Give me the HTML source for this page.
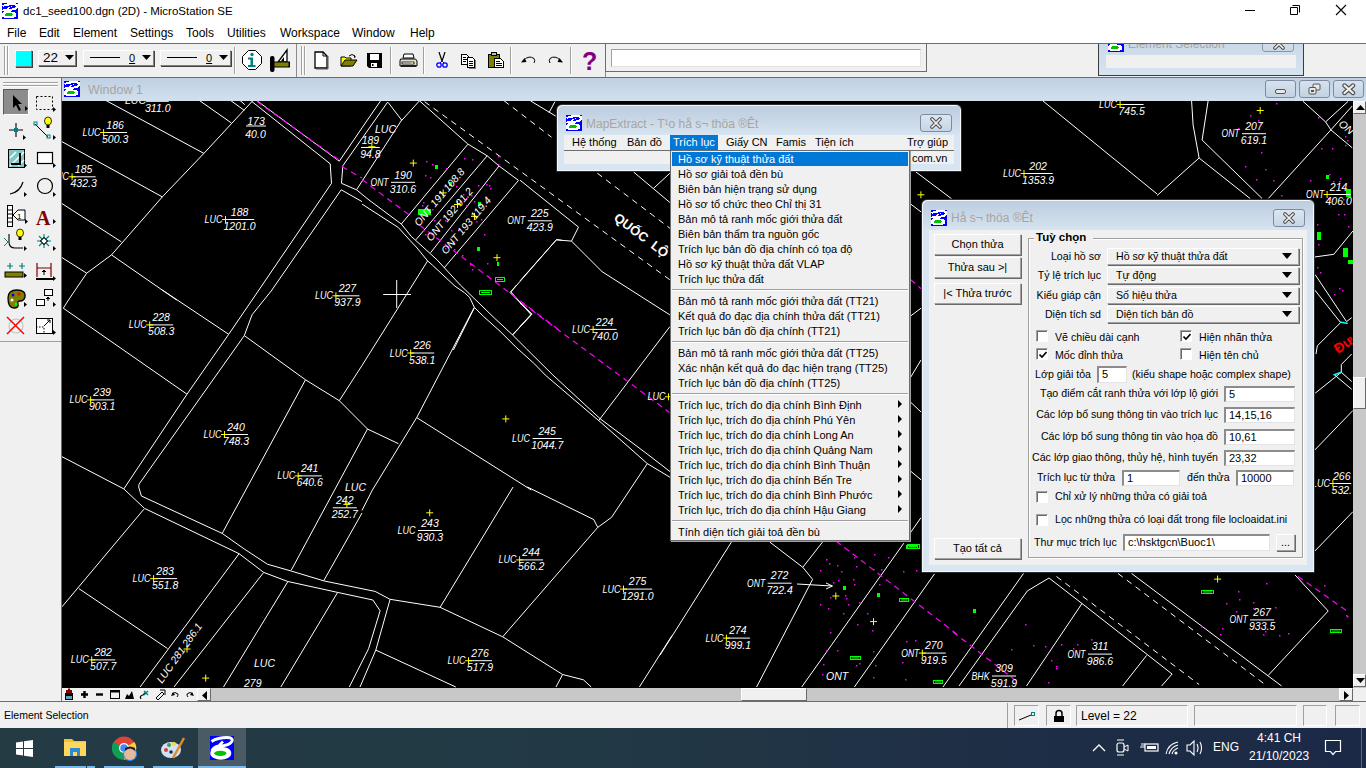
<!DOCTYPE html>
<html><head><meta charset="utf-8">
<style>
*{margin:0;padding:0;box-sizing:border-box}
html,body{width:1366px;height:768px;overflow:hidden;background:#f0f0f0;font-family:"Liberation Sans",sans-serif;font-size:12px;color:#000}
.a{position:absolute}
.t{position:absolute;white-space:nowrap;line-height:1}
</style></head><body>

<div class="a" style="left:0px;top:44px;width:1366px;height:33px;background:#f0f0f0;"></div>
<div class="a" style="left:4px;top:46px;width:1px;height:29px;background:#a0a0a0;"></div>
<div class="a" style="left:5px;top:46px;width:1px;height:29px;background:#fff;"></div>
<div class="a" style="left:7px;top:46px;width:1px;height:29px;background:#a0a0a0;"></div>
<div class="a" style="left:8px;top:46px;width:1px;height:29px;background:#fff;"></div>
<div class="a" style="left:301px;top:46px;width:1px;height:29px;background:#a0a0a0;"></div>
<div class="a" style="left:302px;top:46px;width:1px;height:29px;background:#fff;"></div>
<div class="a" style="left:304px;top:46px;width:1px;height:29px;background:#a0a0a0;"></div>
<div class="a" style="left:305px;top:46px;width:1px;height:29px;background:#fff;"></div>
<div class="a" style="left:296px;top:44px;width:1px;height:33px;background:#8a8a8a;"></div>
<div class="a" style="left:605px;top:44px;width:1px;height:33px;background:#8a8a8a;"></div>
<div class="a" style="left:0px;top:77px;width:61px;height:1px;background:#6d6d6d;"></div>
<div class="a" style="left:15px;top:50px;width:17px;height:17px;background:#00ffff;border-top:1px solid #fff;border-left:1px solid #fff;border-right:1px solid #808080;border-bottom:1px solid #808080;box-shadow:1px 1px 0 #404040"></div>
<div class="a" style="left:38px;top:50px;width:38px;height:16px;background:#f0f0f0;border-top:1px solid #fff;border-left:1px solid #fff;border-right:1px solid #808080;border-bottom:1px solid #808080;box-shadow:1px 1px 0 #404040"><div class="t" style="left:4px;top:-0.5px;font-size:13.5px;color:#000;font-weight:400;">22</div><svg class="a" style="left:26px;top:4px" width="9" height="6"><path d="M0 0h9L4.5 5z" fill="#000"/></svg></div>
<div class="a" style="left:83px;top:50px;width:71px;height:16px;background:#f0f0f0;border-top:1px solid #fff;border-left:1px solid #fff;border-right:1px solid #808080;border-bottom:1px solid #808080;box-shadow:1px 1px 0 #404040"><div class="a" style="left:6px;top:6px;width:30px;height:1px;background:#000"></div><div class="t" style="left:45px;top:2px;font-size:11px;color:#000;font-weight:400;"><u>0</u></div><svg class="a" style="left:58px;top:4px" width="9" height="6"><path d="M0 0h9L4.5 5z" fill="#000"/></svg></div>
<div class="a" style="left:160px;top:50px;width:71px;height:16px;background:#f0f0f0;border-top:1px solid #fff;border-left:1px solid #fff;border-right:1px solid #808080;border-bottom:1px solid #808080;box-shadow:1px 1px 0 #404040"><div class="a" style="left:6px;top:6px;width:30px;height:1px;background:#000"></div><div class="t" style="left:45px;top:2px;font-size:11px;color:#000;font-weight:400;"><u>0</u></div><svg class="a" style="left:58px;top:4px" width="9" height="6"><path d="M0 0h9L4.5 5z" fill="#000"/></svg></div>
<div class="a" style="left:234px;top:47px;width:1px;height:27px;background:#a0a0a0;"></div>
<div class="a" style="left:235px;top:47px;width:1px;height:27px;background:#fff;"></div>
<svg class="a" style="left:241px;top:49px" width="23" height="23"><path d="M7.5 1.5h7l6 6v7l-6 6h-7l-6-6v-7z" fill="#fff" stroke="#000" stroke-width="1"/><circle cx="11" cy="5.5" r="1.7" fill="#008080"/><path d="M7 8.5h5v7.5h2.5v2H7v-2h2.5V10.5H7z" fill="#008080"/></svg>
<svg class="a" style="left:269px;top:48px" width="22" height="25"><path d="M18 2L9 14h9z" fill="#fff" stroke="#000" stroke-width="1.3"/><path d="M15 9l-3 4h3z" fill="#000"/><rect x="1" y="8" width="4.5" height="16" rx="2" fill="#000"/><rect x="4" y="13.5" width="17" height="6" fill="#000"/><rect x="5.5" y="14.5" width="14" height="4" fill="#808000"/></svg>
<svg class="a" style="left:314px;top:51px" width="16" height="19"><path d="M1 1h8l4 4v12H1z" fill="#fff" stroke="#000" stroke-width="1.3"/><path d="M9 1v4h4" fill="none" stroke="#000"/><path d="M14 5v13H2" fill="none" stroke="#555" stroke-width="1"/></svg>
<svg class="a" style="left:340px;top:53px" width="18" height="15"><path d="M1 4h4l1 1h5v8H1z" fill="#ffff00" stroke="#000" stroke-width="1"/><path d="M1 13l4-6h12l-4 6z" fill="#808000" stroke="#000" stroke-width="1"/><path d="M9 3q3-3 6 0" fill="none" stroke="#000"/><path d="M14 2l2 2-2 1z" fill="#000"/></svg>
<svg class="a" style="left:366px;top:52px" width="18" height="17"><path d="M1 1h15v15H3l-2-2z" fill="#000"/><rect x="4" y="2" width="9" height="6" fill="#fff"/><rect x="5" y="11" width="6" height="4" fill="#fff"/><rect x="6" y="12" width="1.5" height="2" fill="#000"/></svg>
<div class="a" style="left:390px;top:47px;width:1px;height:27px;background:#a0a0a0;"></div>
<div class="a" style="left:391px;top:47px;width:1px;height:27px;background:#fff;"></div>
<svg class="a" style="left:399px;top:53px" width="19" height="15"><path d="M5 1h9l1 4H4z" fill="#fff" stroke="#000"/><path d="M1.5 6h15l1.5 2v5H1v-5z" fill="#e0e0e0" stroke="#000"/><rect x="3" y="9" width="12" height="2" fill="#fff" stroke="#000" stroke-width=".8"/><rect x="12" y="9.3" width="2" height="1.5" fill="#ffd800"/><path d="M2 13h15" stroke="#000" stroke-width="1.5"/></svg>
<div class="a" style="left:423px;top:47px;width:1px;height:27px;background:#a0a0a0;"></div>
<div class="a" style="left:424px;top:47px;width:1px;height:27px;background:#fff;"></div>
<svg class="a" style="left:436px;top:52px" width="12" height="17"><path d="M3 0l3 9M9 0L6 9" stroke="#000" stroke-width="1.2"/><circle cx="3" cy="13" r="2.2" fill="none" stroke="#0000ff" stroke-width="1.3"/><circle cx="9" cy="13" r="2.2" fill="none" stroke="#0000ff" stroke-width="1.3"/><path d="M6 9L4 11M6 9l2 2" stroke="#0000ff"/></svg>
<svg class="a" style="left:460px;top:53px" width="17" height="16" shape-rendering="crispEdges"><path d="M1.5 1.5h5l2 2v8h-7z" fill="#fff" stroke="#000"/><path d="M7.5 4.5h5l2 2v8h-7z" fill="#fff" stroke="#000"/><path d="M3 4h3M3 6h4M3 8h3M9 8h4M9 10h4M9 12h4" stroke="#000" stroke-width="1"/><path d="M15 7v8.5H8.5" fill="none" stroke="#808080"/></svg>
<svg class="a" style="left:487px;top:51px" width="19" height="18" shape-rendering="crispEdges"><path d="M1.5 3.5h11v13h-11z" fill="#808000" stroke="#000"/><path d="M4.5 1.5h5v3h-5z" fill="#c0c0c0" stroke="#000"/><path d="M7.5 7.5h6l3 3v6h-9z" fill="#fff" stroke="#000"/><path d="M9 10h4M9 12h6M9 14h6" stroke="#000" stroke-width="1"/></svg>
<div class="a" style="left:510px;top:47px;width:1px;height:27px;background:#a0a0a0;"></div>
<div class="a" style="left:511px;top:47px;width:1px;height:27px;background:#fff;"></div>
<svg class="a" style="left:520px;top:55px" width="17" height="10"><path d="M4 5Q9 0 14 3.5Q15.5 5.5 14 8" fill="none" stroke="#000" stroke-width="1"/><path d="M1 7.5l3.5-4.5 2 4z" fill="#000"/></svg>
<svg class="a" style="left:547px;top:55px" width="17" height="10"><path d="M13 5Q8 0 3 3.5Q1.5 5.5 3 8" fill="none" stroke="#000" stroke-width="1"/><path d="M16 7.5l-3.5-4.5-2 4z" fill="#000"/></svg>
<div class="a" style="left:570px;top:47px;width:1px;height:27px;background:#a0a0a0;"></div>
<div class="a" style="left:571px;top:47px;width:1px;height:27px;background:#fff;"></div>
<div class="t" style="left:582px;top:49px;font-size:25px;color:#800080;font-weight:700;">?</div>
<div class="a" style="left:605px;top:43px;width:322px;height:29px;border:1px solid #6d6d6d;border-top:none;background:#f0f0f0"></div>
<div class="a" style="left:611px;top:49px;width:310px;height:18px;background:#fff;border-top:1px solid #a0a0a0;border-left:1px solid #a0a0a0;border-right:1px solid #e3e3e3;border-bottom:1px solid #e3e3e3"></div>
<div class="a" style="left:61px;top:77px;width:1305px;height:1px;background:#6d6d6d;"></div>
<div class="a" style="left:61px;top:77px;width:1px;height:626px;background:#6d6d6d;"></div>
<div class="a" style="left:62px;top:78px;width:1304px;height:23px;background:linear-gradient(#bfd0e2,#d2e0ee);"></div>
<svg class="a" style="left:64px;top:81px" width="16" height="16" viewBox="0 0 16 16" shape-rendering="crispEdges"><rect width="16" height="16" fill="#fff"/><path d="M0 0h5v1h-5zM14 0h2v1h-2zM0 1h2v1h-2zM7 2h6v1h-6zM0 3h1v1h-1zM2 3h7v1h-7zM10 3h4v1h-4zM0 4h6v1h-6zM8 4h5v1h-5zM0 5h5v1h-5zM7 5h3v1h-3zM15 5h1v1h-1zM0 6h1v1h-1zM14 6h2v1h-2zM10 7h6v1h-6zM0 8h2v1h-2zM9 8h7v1h-7zM0 9h1v1h-1zM13 9h3v1h-3zM14 10h2v1h-2zM14 11h2v1h-2zM14 12h2v1h-2zM14 13h2v1h-2zM0 14h2v1h-2zM12 14h4v1h-4zM0 15h16v1h-16z" fill="#0000ff"/><path d="M4 10h6v1h-6zM3 11h8v1h-8zM3 12h7v1h-7z" fill="#00c000"/></svg>
<div class="t" style="left:88px;top:84px;font-size:12.5px;color:#a8a4a0;font-weight:400;">Window 1</div>
<div class="a" style="left:1265px;top:80px;width:31px;height:18px;border:1px solid #7d8ba0;border-radius:3px;background:linear-gradient(#d6e2ee,#c3d2e2)"><div class="a" style="left:9px;top:8px;width:11px;height:5px;background:#e8e8e8;border:1px solid #555;border-radius:2px"></div></div>
<div class="a" style="left:1299px;top:80px;width:31px;height:18px;border:1px solid #7d8ba0;border-radius:3px;background:linear-gradient(#d6e2ee,#c3d2e2)"><svg class="a" style="left:8px;top:2px" width="14" height="12"><rect x="5" y="1" width="7" height="6" rx="1" fill="#e8e8e8" stroke="#555"/><rect x="1" y="4.5" width="7" height="6.5" rx="1" fill="#e8e8e8" stroke="#555"/><rect x="3" y="7" width="3" height="2" fill="#555"/></svg></div>
<div class="a" style="left:1333px;top:80px;width:31px;height:18px;border:1px solid #7d8ba0;border-radius:3px;background:linear-gradient(#d6e2ee,#c3d2e2)"><svg class="a" style="left:8px;top:2px" width="14" height="13"><path d="M2.5 2.5l8.5 7.5M11 2.5l-8.5 7.5" stroke="#505050" stroke-width="4.4" stroke-linecap="round"/><path d="M2.5 2.5l8.5 7.5M11 2.5l-8.5 7.5" stroke="#f0f0f0" stroke-width="2.2" stroke-linecap="round"/></svg></div>
<div class="a" style="left:62px;top:101px;width:1291px;height:587px;background:#000;"></div>
<svg class="a" style="left:62px;top:101px" width="1291" height="587" viewBox="62 101 1291 587" font-family="Liberation Sans">
<path d="M105.0 100.0L203.9 153.4M198.7 100.0L231.3 122.9M230.0 100.0L244.3 110.4M239.6 100.0L244.8 104.7M253.4 100.0L203.9 153.4L162.3 196.9L111.5 254.9L86.7 273.2L68.5 300.0L63.3 308.2M62.0 141.7L162.3 196.9M62.0 203.6L121.4 241.9M62.0 257.6L86.7 273.2M111.5 254.9L176.6 300.0M251.6 101.3L330.2 163.8L331.5 183.3L258.9 290.0M341.2 189.8L271.9 290.0M256.0 100.0L339.3 161.2L362.0 127.9M342.8 165.8L341.5 183.3L356.5 189.8L369.0 200.0M387.7 102.0L342.8 165.8M402.0 119.5L356.5 189.8M341.2 189.8L362.0 201.6M145.9 101.3L168.8 101.3M246.0 126.0L266.0 126.0M380.6 100.8L362.0 127.9M388.2 102.5L401.8 120.3M419.5 100.8L401.8 120.3M419.5 100.8L467.8 144.0L487.2 155.8L499.1 166.0L518.5 180.4M530.4 100.8L555.7 116.1M549.0 112.7L554.9 101.7M467.8 144.3L401.3 224.0M487.2 155.8L415.9 239.8M499.0 166.0L430.6 252.7M518.5 180.4L444.0 268.0M369.0 200.0L401.3 224.0L411.2 236.3L422.9 246.9L437.0 259.8L460.3 285.0L494.8 318.4L512.4 334.8L526.5 348.9L552.9 375.0M362.0 204.1L398.3 227.5L410.0 240.4L417.1 248.0L427.6 260.9L432.3 265.0L455.0 286.2L464.4 292.6L469.6 297.3L474.3 307.3L483.7 316.6L500.1 331.3L515.9 347.1L534.7 364.1L545.2 375.0M427.6 260.9L362.0 365.5M474.3 307.9L453.4 350.0M510.1 292.6L516.5 285.0M510.1 292.6L531.8 314.3L512.4 334.8M383.2 294.5L411.0 294.5M396.7 280.0L396.7 308.0M562.0 240.3L556.6 239.5L510.9 291.9L531.2 314.8L512.6 335.1M520.0 180.2L578.5 227.1L571.5 241.1L556.3 239.9L520.0 280.9M571.5 241.1L602.0 271.6L669.9 314.9M633.6 172.0L669.9 202.5M653.5 188.4L669.9 173.2M520.0 303.2L531.7 313.7L520.0 326.6M669.9 326.6L599.0 420.2M63.3 308.2L187.0 394.2M162.3 290.0L228.7 334.3M258.9 290.0L228.7 334.3L187.0 394.2L123.8 488.9L144.5 508.4L239.1 553.7L263.7 572.4L287.9 581.5L337.6 592.4L372.9 600.0L380.1 610.8L368.6 648.7L349.3 687.0M272.0 290.0L252.1 314.7L244.3 335.6L139.0 484.2L138.7 487.0L141.4 496.0L222.2 533.4L244.3 549.0L267.4 564.2L291.1 571.0L324.3 581.0L375.1 591.4L390.1 599.3L440.1 607.3L502.7 636.8L562.6 674.5L583.4 679.8L591.2 687.0M244.3 335.6L305.5 379.8L339.3 400.7L367.5 429.0L398.5 443.7M305.5 379.8L222.2 533.4M362.0 365.5L339.3 400.7M367.5 429.0L291.2 570.3M62.0 456.7L123.8 488.9M474.3 307.3L416.7 417.6L372.4 490.0L362.0 510.4M545.2 375.0L601.5 423.0L647.3 463.6L670.2 477.4M552.9 375.0L600.1 418.7L645.9 453.0L670.2 471.7M416.7 417.6L531.3 490.0M647.3 463.6L611.5 517.4M144.0 509.1L62.0 606.8M78.9 588.6L167.5 648.5M239.1 553.7L140.1 687.0M263.7 572.4L174.0 687.0M287.9 581.5L223.5 687.0M337.6 592.4L280.8 687.0M362.0 513.0L323.7 580.8M513.1 487.0L440.1 607.3M527.4 487.0L593.8 519.6L597.7 527.4L611.5 517.4M597.7 527.4L502.7 636.8M390.1 599.3L375.8 650.1L360.0 687.0M375.8 650.1L455.8 687.0M562.6 674.5L556.0 687.0M672.0 635.5L639.4 687.0M731.4 542.1L660.0 655.2M769.8 542.1L802.8 567.3L812.6 579.4L756.6 687.0M822.5 542.1L802.8 567.3M903.8 543.2L801.7 687.0M934.5 573.9L854.4 687.0M797.0 584.0L832.4 586.0M826.0 583.0L832.4 586.0L826.0 589.0M1023.5 573.5L943.0 687.0M1049.0 578.0L1027.4 590.9L959.0 686.0M1049.0 578.0L1082.0 603.5L1172.1 674.0L1161.6 686.0M1082.0 603.5L1026.5 686.0M1146.6 655.4L1122.6 686.0M1131.6 573.5L1281.6 686.0M1295.1 575.0L1328.2 611.0L1268.1 675.5M1043.0 101.0L1157.1 194.0M1191.6 101.0L1193.1 125.0L1199.1 158.0L1157.1 195.5M1208.1 101.0L1202.1 140.0L1262.1 198.5M1199.1 158.0L1250.1 198.5M1303.0 101.3L1325.6 121.9L1330.9 129.9L1352.2 147.8M1352.2 106.0L1330.9 129.9L1268.5 198.3M1348.2 101.3L1325.6 121.9M916.0 172.0L951.5 198.7M1352.9 231.0L1333.8 254.3L1314.6 257.0M1315.2 274.7L1346.5 321.6L1351.7 317.7M1314.6 289.8L1340.6 322.6M1340.6 322.6L1317.3 345.9L1316.0 354.0M1351.7 354.0L1341.3 364.5L1341.3 372.3L1315.2 393.2M1341.3 372.3L1351.7 381.5M1334.7 375.0L1351.7 389.3M1352.9 410.5L1314.6 450.2M1352.9 511.7L1314.6 551.3M910.6 204.0L921.0 211.9M910.6 316.0L921.0 308.2M921.0 360.0L910.1 378.2M910.1 401.7L921.0 412.0M910.1 470.7L921.0 479.8M921.0 517.6L910.1 533.2" fill="none" stroke="#fff" stroke-width="1"/>
<path d="M504.1 100.8L551.5 137.2M424.6 101.7L669.9 279.8M597.3 173.2L669.9 228.2M1056.5 576.5L1199.1 684.5M1118.0 573.5L1265.1 684.5" fill="none" stroke="#fff" stroke-width="1" stroke-dasharray="6 5"/>
<path d="M256.8 101.3L339.3 160.4M341.9 166.4L362.0 178.1M362.0 179.5L409.4 215.1M419.5 225.1L559.1 330.0M522.3 303.2L669.4 412.4M836.0 541.0L960.0 636.5M953.0 632.0L1019.0 683.0M1298.1 576.5L1349.2 612.5M910.6 279.6L921.0 288.7" fill="none" stroke="#ff00ff" stroke-width="1.2" stroke-dasharray="6 4.5"/>
<path d="M1340.0 322.0L1347.8 323.6M1341.3 372.3L1333.4 375.0" fill="none" stroke="#00ffff" stroke-width="1.5"/>
<path d="M446 168h1.5v1.5h-1.5zM472 159h1.5v1.5h-1.5zM463 194h1.5v1.5h-1.5zM425 211h1.5v1.5h-1.5zM423 202h1.5v1.5h-1.5zM426 161h1.5v1.5h-1.5zM454 249h1.5v1.5h-1.5zM430 177h1.5v1.5h-1.5zM470 264h1.5v1.5h-1.5zM466 198h1.5v1.5h-1.5zM498 156h1.5v1.5h-1.5zM489 185h1.5v1.5h-1.5zM432 164h1.5v1.5h-1.5zM445 248h1.5v1.5h-1.5zM434 220h1.5v1.5h-1.5zM471 195h1.5v1.5h-1.5zM464 158h1.5v1.5h-1.5zM425 175h1.5v1.5h-1.5zM474 201h1.5v1.5h-1.5zM445 220h1.5v1.5h-1.5zM456 186h1.5v1.5h-1.5zM484 234h1.5v1.5h-1.5zM440 219h1.5v1.5h-1.5zM462 255h1.5v1.5h-1.5zM478 185h1.5v1.5h-1.5zM498 164h1.5v1.5h-1.5zM453 241h1.5v1.5h-1.5zM432 209h1.5v1.5h-1.5zM423 230h1.5v1.5h-1.5zM481 219h1.5v1.5h-1.5zM490 188h1.5v1.5h-1.5zM476 221h1.5v1.5h-1.5zM466 205h1.5v1.5h-1.5zM487 263h1.5v1.5h-1.5zM458 230h1.5v1.5h-1.5zM425 234h1.5v1.5h-1.5zM472 269h1.5v1.5h-1.5zM486 184h1.5v1.5h-1.5zM451 230h1.5v1.5h-1.5zM422 205h1.5v1.5h-1.5zM837 565h1.5v1.5h-1.5zM826 650h1.5v1.5h-1.5zM833 582h1.5v1.5h-1.5zM859 663h1.5v1.5h-1.5zM828 608h1.5v1.5h-1.5zM875 665h1.5v1.5h-1.5zM902 662h1.5v1.5h-1.5zM848 604h1.5v1.5h-1.5zM856 665h1.5v1.5h-1.5zM916 570h1.5v1.5h-1.5zM838 580h1.5v1.5h-1.5zM843 613h1.5v1.5h-1.5zM879 584h1.5v1.5h-1.5zM820 604h1.5v1.5h-1.5zM857 624h1.5v1.5h-1.5zM915 640h1.5v1.5h-1.5zM872 630h1.5v1.5h-1.5zM888 557h1.5v1.5h-1.5zM910 651h1.5v1.5h-1.5zM907 654h1.5v1.5h-1.5zM859 602h1.5v1.5h-1.5zM830 632h1.5v1.5h-1.5zM826 559h1.5v1.5h-1.5zM841 571h1.5v1.5h-1.5zM854 557h1.5v1.5h-1.5zM820 570h1.5v1.5h-1.5zM830 597h1.5v1.5h-1.5zM823 664h1.5v1.5h-1.5zM881 569h1.5v1.5h-1.5zM845 595h1.5v1.5h-1.5zM856 566h1.5v1.5h-1.5zM905 679h1.5v1.5h-1.5zM867 613h1.5v1.5h-1.5zM829 563h1.5v1.5h-1.5zM854 584h1.5v1.5h-1.5zM903 571h1.5v1.5h-1.5zM822 674h1.5v1.5h-1.5zM873 569h1.5v1.5h-1.5zM874 554h1.5v1.5h-1.5zM873 677h1.5v1.5h-1.5zM906 641h1.5v1.5h-1.5zM846 598h1.5v1.5h-1.5zM837 650h1.5v1.5h-1.5zM873 651h1.5v1.5h-1.5zM853 579h1.5v1.5h-1.5zM1328 198h1.5v1.5h-1.5zM1333 181h1.5v1.5h-1.5zM1329 174h1.5v1.5h-1.5zM1261 152h1.5v1.5h-1.5zM1276 103h1.5v1.5h-1.5zM1238 128h1.5v1.5h-1.5zM1265 169h1.5v1.5h-1.5zM1345 145h1.5v1.5h-1.5zM1343 199h1.5v1.5h-1.5zM1345 136h1.5v1.5h-1.5zM1260 123h1.5v1.5h-1.5zM1258 120h1.5v1.5h-1.5zM1307 190h1.5v1.5h-1.5zM1332 148h1.5v1.5h-1.5zM1310 180h1.5v1.5h-1.5zM1245 166h1.5v1.5h-1.5zM1340 178h1.5v1.5h-1.5zM1321 148h1.5v1.5h-1.5zM1256 179h1.5v1.5h-1.5zM1273 180h1.5v1.5h-1.5zM1347 140h1.5v1.5h-1.5zM1281 195h1.5v1.5h-1.5zM1318 117h1.5v1.5h-1.5zM1250 115h1.5v1.5h-1.5zM1339 181h1.5v1.5h-1.5zM1222 628h1.5v1.5h-1.5zM1347 616h1.5v1.5h-1.5zM1253 608h1.5v1.5h-1.5zM1220 571h1.5v1.5h-1.5zM1346 615h1.5v1.5h-1.5zM1279 635h1.5v1.5h-1.5zM1265 631h1.5v1.5h-1.5zM1324 585h1.5v1.5h-1.5zM1238 591h1.5v1.5h-1.5zM1236 611h1.5v1.5h-1.5zM1239 599h1.5v1.5h-1.5zM1220 634h1.5v1.5h-1.5zM1253 602h1.5v1.5h-1.5zM1288 633h1.5v1.5h-1.5zM1263 634h1.5v1.5h-1.5zM1275 607h1.5v1.5h-1.5zM1279 571h1.5v1.5h-1.5zM1266 583h1.5v1.5h-1.5zM1201 626h1.5v1.5h-1.5zM1226 603h1.5v1.5h-1.5zM1073 648h1.5v1.5h-1.5zM1033 645h1.5v1.5h-1.5zM1056 668h1.5v1.5h-1.5zM1011 649h1.5v1.5h-1.5zM1025 624h1.5v1.5h-1.5zM1077 644h1.5v1.5h-1.5zM1056 666h1.5v1.5h-1.5zM1091 639h1.5v1.5h-1.5zM1061 644h1.5v1.5h-1.5zM1051 660h1.5v1.5h-1.5zM1045 646h1.5v1.5h-1.5zM1048 682h1.5v1.5h-1.5zM1339 288h1.5v1.5h-1.5zM1348 226h1.5v1.5h-1.5zM1334 294h1.5v1.5h-1.5zM1344 214h1.5v1.5h-1.5zM1318 244h1.5v1.5h-1.5zM1317 224h1.5v1.5h-1.5zM1317 267h1.5v1.5h-1.5zM1342 290h1.5v1.5h-1.5zM1320 272h1.5v1.5h-1.5zM1338 214h1.5v1.5h-1.5z" fill="#ff00ff"/>
<rect x="435" y="165" width="3" height="4" fill="#00ff00"/>
<rect x="449" y="182" width="3" height="4" fill="#00ff00"/>
<rect x="418" y="209" width="13" height="6" fill="#00ff00"/>
<rect x="478" y="202" width="3" height="4" fill="#00ff00"/>
<rect x="477" y="247" width="3" height="4" fill="#00ff00"/>
<rect x="497" y="262" width="2" height="4" fill="#00ff00"/>
<rect x="495.5" y="277.5" width="9" height="4" fill="none" stroke="#00ff00" stroke-width="1"/><path d="M497 279.5h6" stroke="#00ff00" stroke-width="1"/>
<rect x="479.5" y="290.5" width="12" height="4" fill="none" stroke="#00ff00" stroke-width="1"/><path d="M481 292.5h9" stroke="#00ff00" stroke-width="1"/>
<rect x="843" y="586" width="3" height="4" fill="#00ff00"/>
<rect x="877" y="593" width="3" height="4" fill="#00ff00"/>
<rect x="899.5" y="598.5" width="9" height="3" fill="none" stroke="#00ff00" stroke-width="1"/><path d="M901 600.0h6" stroke="#00ff00" stroke-width="1"/>
<rect x="850.5" y="656.5" width="10" height="3" fill="none" stroke="#00ff00" stroke-width="1"/><path d="M852 658.0h7" stroke="#00ff00" stroke-width="1"/>
<rect x="906.5" y="545.5" width="11" height="3" fill="none" stroke="#00ff00" stroke-width="1"/><path d="M908 547.0h8" stroke="#00ff00" stroke-width="1"/>
<rect x="933.5" y="680.5" width="9" height="3" fill="none" stroke="#00ff00" stroke-width="1"/><path d="M935 682.0h6" stroke="#00ff00" stroke-width="1"/>
<rect x="1201.5" y="590.5" width="12" height="3" fill="none" stroke="#00ff00" stroke-width="1"/><path d="M1203 592.0h9" stroke="#00ff00" stroke-width="1"/>
<rect x="973" y="609" width="3" height="4" fill="#00ff00"/>
<rect x="1330.5" y="629.5" width="11" height="3" fill="none" stroke="#00ff00" stroke-width="1"/><path d="M1332 631.0h8" stroke="#00ff00" stroke-width="1"/>
<rect x="1326" y="175" width="3" height="4" fill="#00ff00"/>
<rect x="1346" y="189" width="5" height="8" fill="#00ff00"/>
<rect x="1317" y="232" width="4" height="8" fill="#00ff00"/>
<rect x="1343" y="248" width="5" height="9" fill="#00ff00"/>
<rect x="1348" y="260" width="5" height="4" fill="#00ff00"/>
<rect x="907.5" y="544.5" width="12" height="4" fill="none" stroke="#00ff00" stroke-width="1"/><path d="M909 546.5h9" stroke="#00ff00" stroke-width="1"/>
<text x="100.6" y="136.0" text-anchor="end" font-size="10.5" font-style="italic" fill="#fff" textLength="18" lengthAdjust="spacingAndGlyphs">LUC</text>
<path d="M103.1 132.5h24.0" stroke="#fff" stroke-width="1"/>
<text x="115.1" y="128.7" text-anchor="middle" font-size="10.5" font-style="italic" fill="#fff">186</text>
<text x="115.1" y="143.0" text-anchor="middle" font-size="10.5" font-style="italic" fill="#fff">500.3</text>
<path d="M100.1 132.5h7M103.6 129.0v7" stroke="#ffff00" stroke-width="1"/>
<text x="69.1" y="180.3" text-anchor="end" font-size="10.5" font-style="italic" fill="#fff" textLength="18" lengthAdjust="spacingAndGlyphs">LUC</text>
<path d="M71.6 176.8h24.0" stroke="#fff" stroke-width="1"/>
<text x="83.6" y="173.0" text-anchor="middle" font-size="10.5" font-style="italic" fill="#fff">185</text>
<text x="83.6" y="187.3" text-anchor="middle" font-size="10.5" font-style="italic" fill="#fff">432.3</text>
<path d="M68.6 176.8h7M72.1 173.3v7" stroke="#ffff00" stroke-width="1"/>
<text x="222.5" y="223.0" text-anchor="end" font-size="10.5" font-style="italic" fill="#fff" textLength="18" lengthAdjust="spacingAndGlyphs">LUC</text>
<path d="M225.0 219.5h29.2" stroke="#fff" stroke-width="1"/>
<text x="239.6" y="215.7" text-anchor="middle" font-size="10.5" font-style="italic" fill="#fff">188</text>
<text x="239.6" y="230.0" text-anchor="middle" font-size="10.5" font-style="italic" fill="#fff">1201.0</text>
<path d="M222.0 219.5h7M225.5 216.0v7" stroke="#ffff00" stroke-width="1"/>
<text x="332.9" y="299.3" text-anchor="end" font-size="10.5" font-style="italic" fill="#fff" textLength="18" lengthAdjust="spacingAndGlyphs">LUC</text>
<path d="M335.4 295.8h24.0" stroke="#fff" stroke-width="1"/>
<text x="347.4" y="292.0" text-anchor="middle" font-size="10.5" font-style="italic" fill="#fff">227</text>
<text x="347.4" y="306.3" text-anchor="middle" font-size="10.5" font-style="italic" fill="#fff">937.9</text>
<path d="M332.4 295.8h7M335.9 292.3v7" stroke="#ffff00" stroke-width="1"/>
<path d="M361.0 147.5h18.8" stroke="#fff" stroke-width="1"/>
<text x="370.4" y="143.7" text-anchor="middle" font-size="10.5" font-style="italic" fill="#fff">189</text>
<text x="370.4" y="158.0" text-anchor="middle" font-size="10.5" font-style="italic" fill="#fff">94.8</text>
<text x="388.5" y="185.8" text-anchor="end" font-size="10.5" font-style="italic" fill="#fff" textLength="18" lengthAdjust="spacingAndGlyphs">ONT</text>
<path d="M391.0 182.3h24.0" stroke="#fff" stroke-width="1"/>
<text x="403.0" y="178.5" text-anchor="middle" font-size="10.5" font-style="italic" fill="#fff">190</text>
<text x="403.0" y="192.8" text-anchor="middle" font-size="10.5" font-style="italic" fill="#fff">310.6</text>
<text x="525.3" y="224.3" text-anchor="end" font-size="10.5" font-style="italic" fill="#fff" textLength="18" lengthAdjust="spacingAndGlyphs">ONT</text>
<path d="M527.8 220.8h24.0" stroke="#fff" stroke-width="1"/>
<text x="539.8" y="217.0" text-anchor="middle" font-size="10.5" font-style="italic" fill="#fff">225</text>
<text x="539.8" y="231.3" text-anchor="middle" font-size="10.5" font-style="italic" fill="#fff">423.9</text>
<text x="590.1" y="332.9" text-anchor="end" font-size="10.5" font-style="italic" fill="#fff" textLength="18" lengthAdjust="spacingAndGlyphs">LUC</text>
<path d="M592.6 329.4h24.0" stroke="#fff" stroke-width="1"/>
<text x="604.6" y="325.6" text-anchor="middle" font-size="10.5" font-style="italic" fill="#fff">224</text>
<text x="604.6" y="339.9" text-anchor="middle" font-size="10.5" font-style="italic" fill="#fff">740.0</text>
<path d="M589.6 329.4h7M593.1 325.9v7" stroke="#ffff00" stroke-width="1"/>
<text x="146.7" y="328.4" text-anchor="end" font-size="10.5" font-style="italic" fill="#fff" textLength="18" lengthAdjust="spacingAndGlyphs">LUC</text>
<path d="M149.2 324.9h24.0" stroke="#fff" stroke-width="1"/>
<text x="161.2" y="321.1" text-anchor="middle" font-size="10.5" font-style="italic" fill="#fff">228</text>
<text x="161.2" y="335.4" text-anchor="middle" font-size="10.5" font-style="italic" fill="#fff">508.3</text>
<path d="M146.2 324.9h7M149.7 321.4v7" stroke="#ffff00" stroke-width="1"/>
<text x="87.6" y="403.4" text-anchor="end" font-size="10.5" font-style="italic" fill="#fff" textLength="18" lengthAdjust="spacingAndGlyphs">LUC</text>
<path d="M90.1 399.9h24.0" stroke="#fff" stroke-width="1"/>
<text x="102.1" y="396.1" text-anchor="middle" font-size="10.5" font-style="italic" fill="#fff">239</text>
<text x="102.1" y="410.4" text-anchor="middle" font-size="10.5" font-style="italic" fill="#fff">903.1</text>
<path d="M87.1 399.9h7M90.6 396.4v7" stroke="#ffff00" stroke-width="1"/>
<text x="221.5" y="438.0" text-anchor="end" font-size="10.5" font-style="italic" fill="#fff" textLength="18" lengthAdjust="spacingAndGlyphs">LUC</text>
<path d="M224.0 434.5h24.0" stroke="#fff" stroke-width="1"/>
<text x="236.0" y="430.7" text-anchor="middle" font-size="10.5" font-style="italic" fill="#fff">240</text>
<text x="236.0" y="445.0" text-anchor="middle" font-size="10.5" font-style="italic" fill="#fff">748.3</text>
<path d="M221.0 434.5h7M224.5 431.0v7" stroke="#ffff00" stroke-width="1"/>
<text x="295.2" y="479.4" text-anchor="end" font-size="10.5" font-style="italic" fill="#fff" textLength="18" lengthAdjust="spacingAndGlyphs">LUC</text>
<path d="M297.7 475.9h24.0" stroke="#fff" stroke-width="1"/>
<text x="309.7" y="472.1" text-anchor="middle" font-size="10.5" font-style="italic" fill="#fff">241</text>
<text x="309.7" y="486.4" text-anchor="middle" font-size="10.5" font-style="italic" fill="#fff">640.6</text>
<path d="M294.7 475.9h7M298.2 472.4v7" stroke="#ffff00" stroke-width="1"/>
<text x="407.7" y="356.5" text-anchor="end" font-size="10.5" font-style="italic" fill="#fff" textLength="18" lengthAdjust="spacingAndGlyphs">LUC</text>
<path d="M410.2 353.0h24.0" stroke="#fff" stroke-width="1"/>
<text x="422.2" y="349.2" text-anchor="middle" font-size="10.5" font-style="italic" fill="#fff">226</text>
<text x="422.2" y="363.5" text-anchor="middle" font-size="10.5" font-style="italic" fill="#fff">538.1</text>
<path d="M407.2 353.0h7M410.7 349.5v7" stroke="#ffff00" stroke-width="1"/>
<text x="530.1" y="442.0" text-anchor="end" font-size="10.5" font-style="italic" fill="#fff" textLength="18" lengthAdjust="spacingAndGlyphs">LUC</text>
<path d="M532.6 438.5h29.2" stroke="#fff" stroke-width="1"/>
<text x="547.2" y="434.7" text-anchor="middle" font-size="10.5" font-style="italic" fill="#fff">245</text>
<text x="547.2" y="449.0" text-anchor="middle" font-size="10.5" font-style="italic" fill="#fff">1044.7</text>
<text x="665.5" y="400.3" text-anchor="end" font-size="10.5" font-style="italic" fill="#fff" textLength="18" lengthAdjust="spacingAndGlyphs">LUC</text>
<path d="M665.0 396.8h7M668.5 393.3v7" stroke="#ffff00" stroke-width="1"/>
<text x="150.6" y="582.1" text-anchor="end" font-size="10.5" font-style="italic" fill="#fff" textLength="18" lengthAdjust="spacingAndGlyphs">LUC</text>
<path d="M153.1 578.6h24.0" stroke="#fff" stroke-width="1"/>
<text x="165.1" y="574.8" text-anchor="middle" font-size="10.5" font-style="italic" fill="#fff">283</text>
<text x="165.1" y="589.1" text-anchor="middle" font-size="10.5" font-style="italic" fill="#fff">551.8</text>
<path d="M150.1 578.6h7M153.6 575.1v7" stroke="#ffff00" stroke-width="1"/>
<text x="88.7" y="663.4" text-anchor="end" font-size="10.5" font-style="italic" fill="#fff" textLength="18" lengthAdjust="spacingAndGlyphs">LUC</text>
<path d="M91.2 659.9h24.0" stroke="#fff" stroke-width="1"/>
<text x="103.2" y="656.1" text-anchor="middle" font-size="10.5" font-style="italic" fill="#fff">282</text>
<text x="103.2" y="670.4" text-anchor="middle" font-size="10.5" font-style="italic" fill="#fff">507.7</text>
<path d="M88.2 659.9h7M91.7 656.4v7" stroke="#ffff00" stroke-width="1"/>
<path d="M332.8 507.8h24.0" stroke="#fff" stroke-width="1"/>
<text x="344.8" y="504.0" text-anchor="middle" font-size="10.5" font-style="italic" fill="#fff">242</text>
<text x="344.8" y="518.3" text-anchor="middle" font-size="10.5" font-style="italic" fill="#fff">252.7</text>
<text x="415.5" y="534.0" text-anchor="end" font-size="10.5" font-style="italic" fill="#fff" textLength="18" lengthAdjust="spacingAndGlyphs">LUC</text>
<path d="M418.0 530.5h24.0" stroke="#fff" stroke-width="1"/>
<text x="430.0" y="526.7" text-anchor="middle" font-size="10.5" font-style="italic" fill="#fff">243</text>
<text x="430.0" y="541.0" text-anchor="middle" font-size="10.5" font-style="italic" fill="#fff">930.3</text>
<text x="516.6" y="563.4" text-anchor="end" font-size="10.5" font-style="italic" fill="#fff" textLength="18" lengthAdjust="spacingAndGlyphs">LUC</text>
<path d="M519.1 559.9h24.0" stroke="#fff" stroke-width="1"/>
<text x="531.1" y="556.1" text-anchor="middle" font-size="10.5" font-style="italic" fill="#fff">244</text>
<text x="531.1" y="570.4" text-anchor="middle" font-size="10.5" font-style="italic" fill="#fff">566.2</text>
<path d="M516.1 559.9h7M519.6 556.4v7" stroke="#ffff00" stroke-width="1"/>
<text x="620.5" y="592.6" text-anchor="end" font-size="10.5" font-style="italic" fill="#fff" textLength="18" lengthAdjust="spacingAndGlyphs">LUC</text>
<path d="M623.0 589.1h29.2" stroke="#fff" stroke-width="1"/>
<text x="637.6" y="585.3" text-anchor="middle" font-size="10.5" font-style="italic" fill="#fff">275</text>
<text x="637.6" y="599.6" text-anchor="middle" font-size="10.5" font-style="italic" fill="#fff">1291.0</text>
<path d="M620.0 589.1h7M623.5 585.6v7" stroke="#ffff00" stroke-width="1"/>
<text x="465.5" y="664.2" text-anchor="end" font-size="10.5" font-style="italic" fill="#fff" textLength="18" lengthAdjust="spacingAndGlyphs">LUC</text>
<path d="M468.0 660.7h24.0" stroke="#fff" stroke-width="1"/>
<text x="480.0" y="656.9" text-anchor="middle" font-size="10.5" font-style="italic" fill="#fff">276</text>
<text x="480.0" y="671.2" text-anchor="middle" font-size="10.5" font-style="italic" fill="#fff">517.9</text>
<path d="M465.0 660.7h7M468.5 657.2v7" stroke="#ffff00" stroke-width="1"/>
<text x="765.1" y="586.7" text-anchor="end" font-size="10.5" font-style="italic" fill="#fff" textLength="18" lengthAdjust="spacingAndGlyphs">ONT</text>
<path d="M767.6 583.2h24.0" stroke="#fff" stroke-width="1"/>
<text x="779.6" y="579.4" text-anchor="middle" font-size="10.5" font-style="italic" fill="#fff">272</text>
<text x="779.6" y="593.7" text-anchor="middle" font-size="10.5" font-style="italic" fill="#fff">722.4</text>
<text x="723.4" y="641.6" text-anchor="end" font-size="10.5" font-style="italic" fill="#fff" textLength="18" lengthAdjust="spacingAndGlyphs">LUC</text>
<path d="M725.9 638.1h24.0" stroke="#fff" stroke-width="1"/>
<text x="737.9" y="634.3" text-anchor="middle" font-size="10.5" font-style="italic" fill="#fff">274</text>
<text x="737.9" y="648.6" text-anchor="middle" font-size="10.5" font-style="italic" fill="#fff">999.1</text>
<path d="M722.9 638.1h7M726.4 634.6v7" stroke="#ffff00" stroke-width="1"/>
<text x="919.3" y="656.6" text-anchor="end" font-size="10.5" font-style="italic" fill="#fff" textLength="18" lengthAdjust="spacingAndGlyphs">ONT</text>
<path d="M921.8 653.1h24.0" stroke="#fff" stroke-width="1"/>
<text x="933.8" y="649.3" text-anchor="middle" font-size="10.5" font-style="italic" fill="#fff">270</text>
<text x="933.8" y="663.6" text-anchor="middle" font-size="10.5" font-style="italic" fill="#fff">919.5</text>
<path d="M918.8 653.1h7M922.3 649.6v7" stroke="#ffff00" stroke-width="1"/>
<text x="1247.6" y="623.4" text-anchor="end" font-size="10.5" font-style="italic" fill="#fff" textLength="18" lengthAdjust="spacingAndGlyphs">ONT</text>
<path d="M1250.1 619.9h24.0" stroke="#fff" stroke-width="1"/>
<text x="1262.1" y="616.1" text-anchor="middle" font-size="10.5" font-style="italic" fill="#fff">267</text>
<text x="1262.1" y="630.4" text-anchor="middle" font-size="10.5" font-style="italic" fill="#fff">933.5</text>
<text x="1085.5" y="657.6" text-anchor="end" font-size="10.5" font-style="italic" fill="#fff" textLength="18" lengthAdjust="spacingAndGlyphs">ONT</text>
<path d="M1088.0 654.1h24.0" stroke="#fff" stroke-width="1"/>
<text x="1100.0" y="650.3" text-anchor="middle" font-size="10.5" font-style="italic" fill="#fff">311</text>
<text x="1100.0" y="664.6" text-anchor="middle" font-size="10.5" font-style="italic" fill="#fff">986.6</text>
<text x="989.5" y="679.5" text-anchor="end" font-size="10.5" font-style="italic" fill="#fff" textLength="18" lengthAdjust="spacingAndGlyphs">BHK</text>
<path d="M992.0 676.0h24.0" stroke="#fff" stroke-width="1"/>
<text x="1004.0" y="672.2" text-anchor="middle" font-size="10.5" font-style="italic" fill="#fff">309</text>
<text x="1004.0" y="686.5" text-anchor="middle" font-size="10.5" font-style="italic" fill="#fff">591.9</text>
<text x="1021.0" y="177.0" text-anchor="end" font-size="10.5" font-style="italic" fill="#fff" textLength="18" lengthAdjust="spacingAndGlyphs">LUC</text>
<path d="M1023.5 173.5h29.2" stroke="#fff" stroke-width="1"/>
<text x="1038.1" y="169.7" text-anchor="middle" font-size="10.5" font-style="italic" fill="#fff">202</text>
<text x="1038.1" y="184.0" text-anchor="middle" font-size="10.5" font-style="italic" fill="#fff">1353.9</text>
<path d="M1020.5 173.5h7M1024.0 170.0v7" stroke="#ffff00" stroke-width="1"/>
<text x="1239.5" y="137.2" text-anchor="end" font-size="10.5" font-style="italic" fill="#fff" textLength="18" lengthAdjust="spacingAndGlyphs">ONT</text>
<path d="M1242.0 133.7h24.0" stroke="#fff" stroke-width="1"/>
<text x="1254.0" y="129.9" text-anchor="middle" font-size="10.5" font-style="italic" fill="#fff">207</text>
<text x="1254.0" y="144.2" text-anchor="middle" font-size="10.5" font-style="italic" fill="#fff">619.1</text>
<text x="1117.1" y="108.0" text-anchor="end" font-size="10.5" font-style="italic" fill="#fff" textLength="18" lengthAdjust="spacingAndGlyphs">LUC</text>
<path d="M1119.6 104.5h24.0" stroke="#fff" stroke-width="1"/>
<text x="1131.6" y="100.7" text-anchor="middle" font-size="10.5" font-style="italic" fill="#fff">205</text>
<text x="1131.6" y="115.0" text-anchor="middle" font-size="10.5" font-style="italic" fill="#fff">745.5</text>
<path d="M1116.6 104.5h7M1120.1 101.0v7" stroke="#ffff00" stroke-width="1"/>
<text x="1324.1" y="198.0" text-anchor="end" font-size="10.5" font-style="italic" fill="#fff" textLength="18" lengthAdjust="spacingAndGlyphs">ONT</text>
<path d="M1326.6 194.5h24.0" stroke="#fff" stroke-width="1"/>
<text x="1338.6" y="190.7" text-anchor="middle" font-size="10.5" font-style="italic" fill="#fff">214</text>
<text x="1338.6" y="205.0" text-anchor="middle" font-size="10.5" font-style="italic" fill="#fff">406.0</text>
<path d="M1323.6 194.5h7M1327.1 191.0v7" stroke="#ffff00" stroke-width="1"/>
<text x="1329.9" y="487.0" text-anchor="end" font-size="10.5" font-style="italic" fill="#fff" textLength="18" lengthAdjust="spacingAndGlyphs">LUC</text>
<path d="M1332.4 483.5h18.8" stroke="#fff" stroke-width="1"/>
<text x="1341.8" y="479.7" text-anchor="middle" font-size="10.5" font-style="italic" fill="#fff">266</text>
<text x="1341.8" y="494.0" text-anchor="middle" font-size="10.5" font-style="italic" fill="#fff">532.</text>
<path d="M1329.4 483.5h7M1332.9 480.0v7" stroke="#ffff00" stroke-width="1"/>
<path d="M368.4 146.7h7M371.9 143.2v7" stroke="#ffff00" stroke-width="1"/>
<path d="M409.8 163.1h7M413.3 159.6v7" stroke="#ffff00" stroke-width="1"/>
<path d="M493.5 257.7h7M497.0 254.2v7" stroke="#ffff00" stroke-width="1"/>
<path d="M439.7 192.9h7M443.2 189.4v7" stroke="#ffff00" stroke-width="1"/>
<path d="M454.0 204.5h7M457.5 201.0v7" stroke="#ffff00" stroke-width="1"/>
<path d="M471.0 216.4h7M474.5 212.9v7" stroke="#ffff00" stroke-width="1"/>
<path d="M502.3 418.9h7M505.8 415.4v7" stroke="#ffff00" stroke-width="1"/>
<path d="M343.4 504.4h7M346.9 500.9v7" stroke="#ffff00" stroke-width="1"/>
<path d="M183.5 649.0h7M187.0 645.5v7" stroke="#ffff00" stroke-width="1"/>
<path d="M202.2 678.1h7M205.7 674.6v7" stroke="#ffff00" stroke-width="1"/>
<path d="M426.2 512.8h7M429.7 509.3v7" stroke="#ffff00" stroke-width="1"/>
<path d="M832.3 596.0h7M835.8 592.5v7" stroke="#ffff00" stroke-width="1"/>
<path d="M870.0 621.6h7M873.5 618.1v7" stroke="#ffff00" stroke-width="1"/>
<path d="M1214.1 579.1h7M1217.6 575.6v7" stroke="#ffff00" stroke-width="1"/>
<path d="M1256.7 110.5h7M1260.2 107.0v7" stroke="#ffff00" stroke-width="1"/>
<path d="M917.4 194.8h7M920.9 191.3v7" stroke="#ffff00" stroke-width="1"/>
<text x="125" y="104" font-size="10.5" font-style="italic" font-weight="400" fill="#fff" text-anchor="start">LUC</text>
<text x="145" y="111.5" font-size="10.5" font-style="italic" font-weight="400" fill="#fff" text-anchor="start">311.0</text>
<text x="256" y="124.5" font-size="10.5" font-style="italic" font-weight="400" fill="#fff" text-anchor="middle">173</text>
<text x="255.5" y="138" font-size="10.5" font-style="italic" font-weight="400" fill="#fff" text-anchor="middle">40.0</text>
<text x="375" y="133" font-size="10.5" font-style="italic" font-weight="400" fill="#fff" text-anchor="start">LUC</text>
<text x="419" y="227" font-size="10.5" font-style="italic" font-weight="400" fill="#fff" text-anchor="start" transform="rotate(-50 419 227)">ONT 191 108.8</text>
<text x="431" y="242" font-size="10.5" font-style="italic" font-weight="400" fill="#fff" text-anchor="start" transform="rotate(-50 431 242)">ONT 192 91.2</text>
<text x="446" y="255" font-size="10.5" font-style="italic" font-weight="400" fill="#fff" text-anchor="start" transform="rotate(-50 446 255)">ONT 193 119.4</text>
<text x="613" y="219.5" font-size="13" font-style="normal" font-weight="700" fill="#fff" text-anchor="start" transform="rotate(37 613 219.5)">QUỐC&#160;&#160;LỘ</text>
<text x="345" y="490.5" font-size="10.5" font-style="italic" font-weight="400" fill="#fff" text-anchor="start">LUC</text>
<text x="162" y="684" font-size="10.5" font-style="italic" font-weight="400" fill="#fff" text-anchor="start" transform="rotate(-55 162 684)">LUC 281 286.1</text>
<text x="254" y="667" font-size="10.5" font-style="italic" font-weight="400" fill="#fff" text-anchor="start">LUC</text>
<text x="244" y="687" font-size="10.5" font-style="italic" font-weight="400" fill="#fff" text-anchor="start">279</text>
<text x="826" y="680" font-size="10.5" font-style="italic" font-weight="400" fill="#fff" text-anchor="start">ONT</text>
<text x="1338" y="125" font-size="10.5" font-style="italic" font-weight="400" fill="#fff" text-anchor="start" transform="rotate(40 1338 125)">ON</text>
<text x="1338" y="354" font-size="14" font-style="normal" font-weight="700" fill="#ff0000" text-anchor="start" transform="rotate(-35 1338 354)">Đư</text>
</svg>
<div class="a" style="left:1353px;top:101px;width:13px;height:587px;background:#c8c8c8;"></div>
<div class="a" style="left:1353px;top:101px;width:13px;height:13px;background:#f0f0f0;border-right:1px solid #696969;border-bottom:1px solid #696969;border-top:1px solid #fff;border-left:1px solid #fff"><svg class="a" style="left:2px;top:3px" width="9" height="6"><path d="M0 5h9L4.5 0z" fill="#000"/></svg></div>
<div class="a" style="left:1353px;top:674px;width:13px;height:13px;background:#f0f0f0;border-right:1px solid #696969;border-bottom:1px solid #696969;border-top:1px solid #fff;border-left:1px solid #fff"><svg class="a" style="left:2px;top:3px" width="9" height="6"><path d="M0 0h9L4.5 5z" fill="#000"/></svg></div>
<div class="a" style="left:1353px;top:377px;width:13px;height:32px;background:#f0f0f0;border-right:1px solid #696969;border-bottom:1px solid #696969;border-top:1px solid #fff;border-left:1px solid #fff"></div>
<div class="a" style="left:62px;top:688px;width:1291px;height:13px;background:#c8c8c8;"></div>
<div class="a" style="left:62px;top:688px;width:135px;height:14px;background:#f0f0f0;"></div>
<div class="a" style="left:197px;top:688px;width:14px;height:13px;background:#f0f0f0;border-right:1px solid #696969;border-bottom:1px solid #696969;border-top:1px solid #fff;border-left:1px solid #fff"><svg class="a" style="left:4px;top:2px" width="6" height="9"><path d="M5 0v9L0 4.5z" fill="#000"/></svg></div>
<div class="a" style="left:1339px;top:688px;width:14px;height:13px;background:#f0f0f0;border-right:1px solid #696969;border-bottom:1px solid #696969;border-top:1px solid #fff;border-left:1px solid #fff"><svg class="a" style="left:4px;top:2px" width="6" height="9"><path d="M0 0v9L5 4.5z" fill="#000"/></svg></div>
<div class="a" style="left:741px;top:688px;width:66px;height:13px;background:#f0f0f0;border-right:1px solid #696969;border-bottom:1px solid #696969;border-top:1px solid #fff;border-left:1px solid #fff"></div>
<div class="a" style="left:1353px;top:688px;width:13px;height:14px;background:#f0f0f0;"></div>
<div class="a" style="left:62px;top:701px;width:1304px;height:1px;background:#404040;"></div>
<svg class="a" style="left:62px;top:688px" width="135" height="13"><rect x="4" y="2" width="6" height="3" fill="#800000"/><rect x="6" y="0.5" width="2" height="3" fill="#800000"/><rect x="3" y="5" width="8" height="7" fill="#000"/><rect x="4" y="8" width="6" height="3" fill="#5fa0c0"/><path d="M19 6.5h7M22.5 3v7" stroke="#000" stroke-width="2.4"/><path d="M34 6.5h7" stroke="#000" stroke-width="2.4"/><rect x="48.5" y="2.5" width="9" height="8" fill="none" stroke="#000"/><rect x="48.5" y="2.5" width="9" height="2" fill="#000"/><path d="M63 11l2-5 2 2 3-5 2 8z" fill="#000"/><path d="M79 11q-2-3 2-4l3-3" fill="none" stroke="#000" stroke-width="1.2"/><path d="M82 3l4 4M86 3l-4 4" stroke="#008080" stroke-width="1.3"/><path d="M94 10l6-6 2 2-6 6z" fill="none" stroke="#000"/><path d="M98 2h5v5" fill="none" stroke="#000"/><path d="M110 6q3-3 6 0q0 2-1 3" fill="none" stroke="#000"/><path d="M109 8l2-4 2 3z" fill="#000"/><path d="M131 6q-3-3-6 0q0 2 1 3" fill="none" stroke="#000"/><path d="M132 8l-2-4-2 3z" fill="#000"/></svg>
<div class="a" style="left:0px;top:78px;width:61px;height:625px;background:#f0f0f0;"></div>
<div class="a" style="left:3px;top:82px;width:55px;height:1px;background:#a0a0a0;"></div>
<div class="a" style="left:3px;top:83px;width:55px;height:1px;background:#fff;"></div>
<div class="a" style="left:3px;top:85px;width:55px;height:1px;background:#a0a0a0;"></div>
<div class="a" style="left:3px;top:86px;width:55px;height:1px;background:#fff;"></div>
<div class="a" style="left:0px;top:341px;width:61px;height:1px;background:#a0a0a0;"></div>
<div class="a" style="left:3px;top:89px;width:26px;height:26px;background:#8c8c8c;border-top:1px solid #5a5a5a;border-left:1px solid #5a5a5a;border-bottom:1px solid #fff;border-right:1px solid #fff"></div>
<svg class="a" style="left:0;top:88px" width="61" height="254"><path d="M13 7l0 13 3-3 3 6 2-1-3-6h4z" fill="#000"/><path d="M25 18v5l3-2.5z" fill="#000"/><rect x="36.5" y="8.5" width="16" height="13" fill="none" stroke="#000" stroke-dasharray="2 2"/><path d="M53 19v5l3-2.5z" fill="#000"/><path d="M9 42h14M16 35v14" stroke="#000" stroke-width="1.1"/><rect x="14" y="40" width="4" height="4" fill="#008080"/><path d="M23 47v5l3-2.5z" fill="#000"/><path d="M35 36l13 13" stroke="#000"/><rect x="34" y="34" width="3" height="3" fill="none" stroke="#008080"/><rect x="47" y="47" width="3" height="3" fill="none" stroke="#008080"/><ellipse cx="48" cy="33" rx="3.5" ry="4" fill="#ffff00" stroke="#000" stroke-width=".8"/><rect x="46.5" y="37" width="3" height="3" fill="#000"/><path d="M53 47v5l3-2.5z" fill="#000"/><rect x="8.5" y="61.5" width="16" height="18" fill="#7fc8c8" stroke="#000"/><path d="M10 78l14-14M10 70l6-6M18 78l6-6" stroke="#fff" stroke-width="1.5"/><path d="M11 76h9V65" fill="none" stroke="#000" stroke-width="2"/><path d="M24 75v5l3-2.5z" fill="#000"/><rect x="37.5" y="64.5" width="15" height="11" fill="#fff" stroke="#000" stroke-width="1.2"/><path d="M53 75v5l3-2.5z" fill="#000"/><path d="M10 106q10-2 13-12" fill="none" stroke="#000" stroke-width="1.2"/><path d="M24 104v5l3-2.5z" fill="#000"/><circle cx="45" cy="98" r="7.5" fill="none" stroke="#000" stroke-width="1.2"/><path d="M53 104v5l3-2.5z" fill="#000"/><rect x="7.5" y="117.5" width="5" height="21" fill="#fff" stroke="#000"/><path d="M7 122h6M7 126h6M7 130h6M7 134h6" stroke="#000"/><path d="M13 127l5-5h7v10h-7z" fill="#fff" stroke="#000"/><text x="17" y="131" font-size="8" font-family="Liberation Sans">1</text><path d="M25 131v5l3-2.5z" fill="#000"/><text x="36" y="137" font-size="20" font-family="Liberation Serif" font-weight="700" fill="#800000">A</text><path d="M53 131v5l3-2.5z" fill="#000"/><path d="M9 146v8q0 6 6 6h8" fill="none" stroke="#000" stroke-width="1.1"/><path d="M4 150l4 4M4 158l4-4" stroke="#008080"/><ellipse cx="20" cy="145" rx="3.5" ry="4" fill="#ffff00" stroke="#000" stroke-width=".8"/><rect x="18.5" y="149" width="3" height="3" fill="#000"/><path d="M24 158v5l3-2.5z" fill="#000"/><path d="M37 153h14M44 146v14M39 148l10 10M49 148l-10 10" stroke="#008080" stroke-width="1.1"/><rect x="41.5" y="150.5" width="5" height="5" transform="rotate(45 44 153)" fill="#fff" stroke="#000"/><path d="M53 158v5l3-2.5z" fill="#000"/><path d="M7 178h6M10 175v6M19 178h6M22 175v6" stroke="#008080" stroke-width="1.2"/><rect x="5" y="184" width="18" height="5" fill="#808000" stroke="#000"/><path d="M24 185v5l3-2.5z" fill="#000"/><path d="M37 175v14M51 175v14M37 180h14" stroke="#800000" stroke-width="1.2"/><path d="M36 191h17" stroke="#000" stroke-width="2"/><path d="M44 182v5M42 184l2-2 2 2" stroke="#000"/><path d="M53 188v5l3-2.5z" fill="#000"/><path d="M8 210q0-8 9-8 9 0 8 7-1 4-5 4-3 0-2 3 1 4-4 4-6 0-6-10z" fill="#808000" stroke="#000" stroke-width="1.3"/><circle cx="13" cy="207" r="1.5" fill="#0000ff"/><circle cx="19" cy="206" r="1.5" fill="#ff0000"/><circle cx="12" cy="212" r="1.5" fill="#fff"/><circle cx="16" cy="216" r="1.5" fill="#00ff00"/><path d="M24 214v5l3-2.5z" fill="#000"/><rect x="44.5" y="201.5" width="8" height="6" fill="#fff" stroke="#000"/><rect x="36.5" y="211.5" width="8" height="6" fill="#fff" stroke="#000"/><path d="M48 209v4M46 211l2-2 2 2" stroke="#000"/><path d="M53 214v5l3-2.5z" fill="#000"/><circle cx="16" cy="238" r="7" fill="none" stroke="#c0c0c0" stroke-width="1.1"/><path d="M7 229l17 17M24 229l-17 17" stroke="#ff0000" stroke-width="1.5"/><rect x="36.5" y="230.5" width="16" height="15" fill="#fff" stroke="#000"/><path d="M36 239h8v7" fill="none" stroke="#000" stroke-dasharray="1.5 1.5"/><path d="M44 238l6-6M47 232h3v3" fill="none" stroke="#000"/><path d="M53 242v5l3-2.5z" fill="#000"/></svg>
<div class="a" style="left:0px;top:702px;width:1366px;height:26px;background:#f0f0f0;"></div>
<div class="a" style="left:0px;top:701px;width:1366px;height:1px;background:#6d6d6d;"></div>
<div class="t" style="left:4px;top:710px;font-size:11px;color:#000;font-weight:400;transform:scaleX(.955);transform-origin:0 0">Element Selection</div>
<div class="a" style="left:1007px;top:703px;width:1px;height:25px;background:#a0a0a0;"></div>
<div class="a" style="left:1014px;top:705px;width:25px;height:21px;border-top:1px solid #a0a0a0;border-left:1px solid #a0a0a0;border-right:1px solid #fff;border-bottom:1px solid #fff"><svg class="a" style="left:3px;top:4px" width="18" height="12"><path d="M1 10l12-5" stroke="#000"/><rect x="13.5" y="2.5" width="3" height="3" fill="none" stroke="#008080"/></svg></div>
<div class="a" style="left:1046px;top:705px;width:25px;height:21px;border-top:1px solid #a0a0a0;border-left:1px solid #a0a0a0;border-right:1px solid #fff;border-bottom:1px solid #fff"><svg class="a" style="left:6px;top:3px" width="12" height="14"><path d="M3 7V4.5q0-3 3-3t3 3V7" fill="none" stroke="#000" stroke-width="1.5"/><rect x="1" y="7" width="10" height="6" fill="#000"/></svg></div>
<div class="a" style="left:1076px;top:705px;width:112px;height:21px;border-top:1px solid #a0a0a0;border-left:1px solid #a0a0a0;border-right:1px solid #fff;border-bottom:1px solid #fff"><div class="t" style="left:4px;top:4px;font-size:12px;color:#000;font-weight:400;">Level = 22</div></div>
<div class="a" style="left:1194px;top:705px;width:103px;height:21px;border-top:1px solid #a0a0a0;border-left:1px solid #a0a0a0;border-right:1px solid #fff;border-bottom:1px solid #fff"></div>
<div class="a" style="left:1303px;top:705px;width:24px;height:21px;border-top:1px solid #a0a0a0;border-left:1px solid #a0a0a0;border-right:1px solid #fff;border-bottom:1px solid #fff"></div>
<div class="a" style="left:1335px;top:705px;width:25px;height:21px;border-top:1px solid #a0a0a0;border-left:1px solid #a0a0a0;border-right:1px solid #fff;border-bottom:1px solid #fff"></div>
<div class="a" style="left:0px;top:728px;width:1366px;height:40px;background:linear-gradient(90deg,#243b44 0%,#223a45 37%,#213545 55%,#1e2e45 74%,#1b2947 100%);"></div>
<svg class="a" style="left:16px;top:740px" width="17" height="17"><path d="M0 2.5l7-1v6.5H0zM8 1.3l9-1.3v8H8zM0 9h7v6.5l-7-1zM8 9h9v8l-9-1.3z" fill="#fff"/></svg>
<svg class="a" style="left:64px;top:738px" width="22" height="19"><path d="M0 1h8l2 2h12v15H0z" fill="#f4c02e"/><path d="M0 4h22v14H0z" fill="#ffd75e"/><path d="M6 10h10v8h-3v-4H9v4H6z" fill="#2a8ad4"/></svg>
<svg class="a" style="left:112px;top:736px" width="26" height="26"><circle cx="12" cy="12" r="11.5" fill="#db4437"/><path d="M12 12L1.5 6A11.5 11.5 0 0 0 12 23.5z" fill="#0f9d58"/><path d="M12 12l10.5-6A11.5 11.5 0 0 1 12 23.5z" fill="#ffcd40"/><circle cx="12" cy="12" r="5" fill="#fff"/><circle cx="12" cy="12" r="3.8" fill="#4285f4"/><circle cx="18" cy="18" r="7" fill="#1e90ff"/><circle cx="18" cy="18" r="6" fill="#e8b89a"/><path d="M13 15q5-5 10 0v-3q-5-3-10 0z" fill="#222"/></svg>
<svg class="a" style="left:160px;top:736px" width="26" height="26"><ellipse cx="11" cy="14" rx="10" ry="8" fill="#cfe3f5"/><circle cx="6" cy="14" r="2" fill="#e53935"/><circle cx="9" cy="9" r="2" fill="#43a047"/><circle cx="14" cy="8" r="2" fill="#fdd835"/><circle cx="11" cy="16" r="1.8" fill="#1c2a45"/><path d="M13 22L24 2" stroke="#e08a2c" stroke-width="2.5"/></svg>
<div class="a" style="left:198px;top:728px;width:48px;height:40px;background:#4b5b66;"></div>
<svg class="a" style="left:210px;top:736px" width="24" height="24" viewBox="0 0 24 24"><rect width="24" height="24" fill="#0000ff"/><path d="M1.5 5.5Q8 1.5 17 1.5Q23 1.5 22 5Q20.5 8.5 14 9.5Q9 10 7 10.5Q3 12 2 15" fill="none" stroke="#fff" stroke-width="3"/><path d="M13 5.5L9 9.5" stroke="#fff" stroke-width="2.5"/><ellipse cx="10.8" cy="17.2" rx="9" ry="5" fill="#fff" stroke="#fff" stroke-width="3"/><ellipse cx="10.3" cy="17.3" rx="6" ry="2.6" fill="#00c000"/></svg>
<div class="a" style="left:55px;top:766px;width:31px;height:2px;background:#76b9ed;"></div>
<div class="a" style="left:87px;top:766px;width:8px;height:2px;background:#76b9ed;"></div>
<div class="a" style="left:104px;top:766px;width:40px;height:2px;background:#76b9ed;"></div>
<div class="a" style="left:153px;top:766px;width:40px;height:2px;background:#76b9ed;"></div>
<div class="a" style="left:198px;top:766px;width:48px;height:2px;background:#76b9ed;"></div>
<svg class="a" style="left:1090px;top:738px" width="120" height="20"><path d="M3 13l6-6 6 6" fill="none" stroke="#fff" stroke-width="1.3"/><rect x="27" y="5" width="7" height="9" rx="2" fill="none" stroke="#fff" stroke-width="1.2"/><path d="M34 9l4-2v6l-4-2" fill="none" stroke="#fff"/><path d="M27 2h7M27 17h7" stroke="#fff"/><rect x="55" y="6" width="13" height="7" fill="none" stroke="#fff" stroke-width="1.2"/><rect x="57" y="8" width="9" height="3" fill="#fff"/><path d="M50 9h5M52 5v3M54 5v3" stroke="#fff"/><path d="M76 16q2-10 12-12M79 16q2-7 9-9M82 16q1-4 6-6" fill="none" stroke="#fff" stroke-width="1.1"/><circle cx="86" cy="15" r="1.5" fill="#fff"/><path d="M97 7h3l4-4v14l-4-4h-3z" fill="none" stroke="#fff" stroke-width="1.1"/><path d="M107 6q2 4 0 8M110 4q3 6 0 12" fill="none" stroke="#fff" stroke-width="1.1"/></svg>
<div class="t" style="left:1213px;top:741px;font-size:12px;color:#fff;font-weight:400;">ENG</div>
<div class="t" style="left:1257px;top:732px;font-size:12px;color:#fff;font-weight:400;">4:41 CH</div>
<div class="t" style="left:1249px;top:750px;font-size:12px;color:#fff;font-weight:400;">21/10/2023</div>
<svg class="a" style="left:1324px;top:739px" width="18" height="18"><path d="M1.5 1.5h15v11h-5l-2.5 3-2.5-3h-5z" fill="none" stroke="#fff" stroke-width="1.2"/></svg>
<div class="a" style="left:1361px;top:728px;width:1px;height:40px;background:#5a6a7a;"></div>
<div class="a" style="left:1098px;top:30px;width:206px;height:46px;background:linear-gradient(#c6d6e7,#d6e3f0);border:1px solid #3c3c3c"></div>
<div class="a" style="left:1106px;top:55px;width:190px;height:13px;background:#f0f0f0;"></div>
<svg class="a" style="left:1108px;top:36px" width="16" height="16" viewBox="0 0 16 16" shape-rendering="crispEdges"><rect width="16" height="16" fill="#fff"/><path d="M0 0h5v1h-5zM14 0h2v1h-2zM0 1h2v1h-2zM7 2h6v1h-6zM0 3h1v1h-1zM2 3h7v1h-7zM10 3h4v1h-4zM0 4h6v1h-6zM8 4h5v1h-5zM0 5h5v1h-5zM7 5h3v1h-3zM15 5h1v1h-1zM0 6h1v1h-1zM14 6h2v1h-2zM10 7h6v1h-6zM0 8h2v1h-2zM9 8h7v1h-7zM0 9h1v1h-1zM13 9h3v1h-3zM14 10h2v1h-2zM14 11h2v1h-2zM14 12h2v1h-2zM14 13h2v1h-2zM0 14h2v1h-2zM12 14h4v1h-4zM0 15h16v1h-16z" fill="#0000ff"/><path d="M4 10h6v1h-6zM3 11h8v1h-8zM3 12h7v1h-7z" fill="#00c000"/></svg>
<div class="t" style="left:1128px;top:38px;font-size:12px;color:#a8a4a0;font-weight:400;">Element Selection</div>
<div class="a" style="left:1262px;top:36px;width:32px;height:16px;border:1px solid #8a97a8;border-radius:3px;background:linear-gradient(#dfe8f2,#c9d6e4)"><svg class="a" style="left:9px;top:1px" width="14" height="12"><path d="M3 2l8 8M11 2l-8 8" stroke="#4a4a4a" stroke-width="3.6" stroke-linecap="round"/><path d="M3 2l8 8M11 2l-8 8" stroke="#f2f2f2" stroke-width="1.7" stroke-linecap="round"/></svg></div>
<div class="a" style="left:1090px;top:0px;width:220px;height:43px;background:#fff;"></div>
<div class="a" style="left:1098px;top:43px;width:206px;height:1px;background:#3c3c3c;"></div>
<div class="a" style="left:0px;top:0px;width:1366px;height:43px;background:#fff;"></div>
<svg class="a" style="left:2px;top:3px" width="16" height="16" viewBox="0 0 16 16" shape-rendering="crispEdges"><rect width="16" height="16" fill="#fff"/><path d="M0 0h5v1h-5zM14 0h2v1h-2zM0 1h2v1h-2zM7 2h6v1h-6zM0 3h1v1h-1zM2 3h7v1h-7zM10 3h4v1h-4zM0 4h6v1h-6zM8 4h5v1h-5zM0 5h5v1h-5zM7 5h3v1h-3zM15 5h1v1h-1zM0 6h1v1h-1zM14 6h2v1h-2zM10 7h6v1h-6zM0 8h2v1h-2zM9 8h7v1h-7zM0 9h1v1h-1zM13 9h3v1h-3zM14 10h2v1h-2zM14 11h2v1h-2zM14 12h2v1h-2zM14 13h2v1h-2zM0 14h2v1h-2zM12 14h4v1h-4zM0 15h16v1h-16z" fill="#0000ff"/><path d="M4 10h6v1h-6zM3 11h8v1h-8zM3 12h7v1h-7z" fill="#00c000"/></svg>
<div class="t" style="left:23px;top:6px;font-size:11.5px;color:#000;font-weight:400;">dc1_seed100.dgn (2D) - MicroStation SE</div>
<svg class="a" style="left:1230px;top:0" width="136" height="22"><path d="M15 10.5h10" stroke="#000" stroke-width="1"/><path d="M60.5 7.5h7v7h-7z M62.5 5.5h7v7" fill="none" stroke="#000"/><path d="M106 5l10 10M116 5l-10 10" stroke="#000" stroke-width="1.1"/></svg>
<div class="t" style="left:7px;top:26.5px;font-size:12px;color:#000;font-weight:400;">File</div>
<div class="t" style="left:39px;top:26.5px;font-size:12px;color:#000;font-weight:400;">Edit</div>
<div class="t" style="left:73px;top:26.5px;font-size:12px;color:#000;font-weight:400;">Element</div>
<div class="t" style="left:130px;top:26.5px;font-size:12px;color:#000;font-weight:400;">Settings</div>
<div class="t" style="left:186px;top:26.5px;font-size:12px;color:#000;font-weight:400;">Tools</div>
<div class="t" style="left:227px;top:26.5px;font-size:12px;color:#000;font-weight:400;">Utilities</div>
<div class="t" style="left:280px;top:26.5px;font-size:12px;color:#000;font-weight:400;">Workspace</div>
<div class="t" style="left:352px;top:26.5px;font-size:12px;color:#000;font-weight:400;">Window</div>
<div class="t" style="left:410px;top:26.5px;font-size:12px;color:#000;font-weight:400;">Help</div>
<div class="a" style="left:0px;top:43px;width:1366px;height:1px;background:#6d6d6d;"></div>
<div class="a" style="left:556px;top:104px;width:406px;height:68px;border:1px solid #2e2e2e;border-radius:6px 6px 0 0;background:linear-gradient(#bccde0 0px,#cddbea 20px,#d7e4f1 30px,#d8e5f2 100%);box-shadow:inset 1px 1px 0 #f4f8fc,inset -1px -1px 0 #f4f8fc"></div>
<svg class="a" style="left:566px;top:115px" width="16" height="16" viewBox="0 0 16 16" shape-rendering="crispEdges"><rect width="16" height="16" fill="#fff"/><path d="M0 0h5v1h-5zM14 0h2v1h-2zM0 1h2v1h-2zM7 2h6v1h-6zM0 3h1v1h-1zM2 3h7v1h-7zM10 3h4v1h-4zM0 4h6v1h-6zM8 4h5v1h-5zM0 5h5v1h-5zM7 5h3v1h-3zM15 5h1v1h-1zM0 6h1v1h-1zM14 6h2v1h-2zM10 7h6v1h-6zM0 8h2v1h-2zM9 8h7v1h-7zM0 9h1v1h-1zM13 9h3v1h-3zM14 10h2v1h-2zM14 11h2v1h-2zM14 12h2v1h-2zM14 13h2v1h-2zM0 14h2v1h-2zM12 14h4v1h-4zM0 15h16v1h-16z" fill="#0000ff"/><path d="M4 10h6v1h-6zM3 11h8v1h-8zM3 12h7v1h-7z" fill="#00c000"/></svg>
<div class="t" style="left:586px;top:118px;font-size:12px;color:#a9a4a0;font-weight:400;">MapExtract - T¹o hå s¬ thöa ®Êt</div>
<div class="a" style="left:920px;top:114px;width:32px;height:18px;border:1px solid #7d8ba0;border-radius:3px;background:linear-gradient(#dbe6f1,#c7d5e4)"><svg class="a" style="left:8px;top:2px" width="14" height="12"><path d="M3 2l8 8M11 2l-8 8" stroke="#4a4a4a" stroke-width="3.6" stroke-linecap="round"/><path d="M3 2l8 8M11 2l-8 8" stroke="#f2f2f2" stroke-width="1.7" stroke-linecap="round"/></svg></div>
<div class="a" style="left:564px;top:135px;width:390px;height:15px;background:#f0f0f0;"></div>
<div class="a" style="left:564px;top:150px;width:346px;height:1px;background:#6d6d6d;"></div>
<div class="a" style="left:564px;top:151px;width:390px;height:13px;background:#f0f0f0;"></div>
<div class="a" style="left:670px;top:135px;width:48px;height:15px;background:#0078d7;"></div>
<div class="t" style="left:572px;top:137px;font-size:11px;color:#000;font-weight:400;">Hệ thống</div>
<div class="t" style="left:627px;top:137px;font-size:11px;color:#000;font-weight:400;">Bản đồ</div>
<div class="t" style="left:673px;top:137px;font-size:11px;color:#fff;font-weight:400;">Trích lục</div>
<div class="t" style="left:726px;top:137px;font-size:11px;color:#000;font-weight:400;">Giấy CN</div>
<div class="t" style="left:776px;top:137px;font-size:11px;color:#000;font-weight:400;">Famis</div>
<div class="t" style="left:815px;top:137px;font-size:11px;color:#000;font-weight:400;">Tiện ích</div>
<div class="t" style="left:907px;top:137px;font-size:11px;color:#000;font-weight:400;">Trợ giúp</div>
<div class="a" style="left:909px;top:150px;width:45px;height:1px;background:#6d6d6d;"></div>
<div class="t" style="left:912px;top:153px;font-size:11px;color:#000;font-weight:400;">com.vn</div>
<div class="a" style="left:921px;top:199px;width:394px;height:374px;border:1px solid #2e2e2e;border-radius:6px 6px 0 0;background:linear-gradient(#bccde0 0px,#cddbea 20px,#d7e4f1 30px,#d8e5f2 100%);box-shadow:inset 1px 1px 0 #f4f8fc,inset -1px -1px 0 #f4f8fc"></div>
<svg class="a" style="left:931px;top:210px" width="16" height="16" viewBox="0 0 16 16" shape-rendering="crispEdges"><rect width="16" height="16" fill="#fff"/><path d="M0 0h5v1h-5zM14 0h2v1h-2zM0 1h2v1h-2zM7 2h6v1h-6zM0 3h1v1h-1zM2 3h7v1h-7zM10 3h4v1h-4zM0 4h6v1h-6zM8 4h5v1h-5zM0 5h5v1h-5zM7 5h3v1h-3zM15 5h1v1h-1zM0 6h1v1h-1zM14 6h2v1h-2zM10 7h6v1h-6zM0 8h2v1h-2zM9 8h7v1h-7zM0 9h1v1h-1zM13 9h3v1h-3zM14 10h2v1h-2zM14 11h2v1h-2zM14 12h2v1h-2zM14 13h2v1h-2zM0 14h2v1h-2zM12 14h4v1h-4zM0 15h16v1h-16z" fill="#0000ff"/><path d="M4 10h6v1h-6zM3 11h8v1h-8zM3 12h7v1h-7z" fill="#00c000"/></svg>
<div class="t" style="left:951px;top:212px;font-size:12px;color:#a9a4a0;font-weight:400;">Hå s¬ thöa ®Êt</div>
<div class="a" style="left:1273px;top:209px;width:32px;height:18px;border:1px solid #7d8ba0;border-radius:3px;background:linear-gradient(#dbe6f1,#c7d5e4)"><svg class="a" style="left:8px;top:2px" width="14" height="12"><path d="M3 2l8 8M11 2l-8 8" stroke="#4a4a4a" stroke-width="3.6" stroke-linecap="round"/><path d="M3 2l8 8M11 2l-8 8" stroke="#f2f2f2" stroke-width="1.7" stroke-linecap="round"/></svg></div>
<div class="a" style="left:929px;top:230px;width:378px;height:335px;background:#f0f0f0;"></div>
<div class="a" style="left:934px;top:234px;width:87px;height:21px;background:#f0f0f0;border-top:1px solid #fff;border-left:1px solid #fff;border-right:1px solid #a0a0a0;border-bottom:1px solid #a0a0a0;box-shadow:1px 1px 0 #696969"><div class="t" style="left:0;width:85px;text-align:center;top:4px;font-size:11px">Chọn thửa</div></div>
<div class="a" style="left:934px;top:257px;width:87px;height:21px;background:#f0f0f0;border-top:1px solid #fff;border-left:1px solid #fff;border-right:1px solid #a0a0a0;border-bottom:1px solid #a0a0a0;box-shadow:1px 1px 0 #696969"><div class="t" style="left:0;width:85px;text-align:center;top:4px;font-size:11px">Thửa sau &gt;|</div></div>
<div class="a" style="left:934px;top:283px;width:87px;height:21px;background:#f0f0f0;border-top:1px solid #fff;border-left:1px solid #fff;border-right:1px solid #a0a0a0;border-bottom:1px solid #a0a0a0;box-shadow:1px 1px 0 #696969"><div class="t" style="left:0;width:85px;text-align:center;top:4px;font-size:11px">|&lt; Thửa trước</div></div>
<div class="a" style="left:934px;top:538px;width:87px;height:21px;background:#f0f0f0;border-top:1px solid #fff;border-left:1px solid #fff;border-right:1px solid #a0a0a0;border-bottom:1px solid #a0a0a0;box-shadow:1px 1px 0 #696969"><div class="t" style="left:0;width:85px;text-align:center;top:4px;font-size:11px">Tạo tất cả</div></div>
<div class="a" style="left:1028px;top:238px;width:275px;height:320px;border:1px solid #a0a0a0;box-shadow:1px 1px 0 #fff, inset 1px 1px 0 #fff"></div>
<div class="a" style="left:1034px;top:232px;width:59px;height:12px;background:#f0f0f0;"></div>
<div class="t" style="left:1036px;top:232px;font-size:11.5px;color:#000;font-weight:700;">Tuỳ chọn</div>
<div class="t" style="left:1000px;width:101px;text-align:right;top:251px;font-size:11px;transform:scaleX(.966);transform-origin:100% 0">Loại hồ sơ</div>
<div class="a" style="left:1107px;top:248px;width:192px;height:17px;background:#f0f0f0;border-top:1px solid #fff;border-left:1px solid #fff;border-right:1px solid #a0a0a0;border-bottom:1px solid #a0a0a0;box-shadow:1px 1px 0 #696969"><div class="t" style="left:8px;top:2px;font-size:11px;color:#000;font-weight:400;transform:scaleX(.966);transform-origin:0 0">Hồ sơ kỹ thuật thửa đất</div><svg class="a" style="left:174px;top:4px" width="10" height="6"><path d="M0 0h10L5 6z" fill="#000"/></svg></div>
<div class="t" style="left:1000px;width:101px;text-align:right;top:270px;font-size:11px;transform:scaleX(.966);transform-origin:100% 0">Tỷ lệ trích lục</div>
<div class="a" style="left:1107px;top:267px;width:192px;height:17px;background:#f0f0f0;border-top:1px solid #fff;border-left:1px solid #fff;border-right:1px solid #a0a0a0;border-bottom:1px solid #a0a0a0;box-shadow:1px 1px 0 #696969"><div class="t" style="left:8px;top:2px;font-size:11px;color:#000;font-weight:400;transform:scaleX(.966);transform-origin:0 0">Tự động</div><svg class="a" style="left:174px;top:4px" width="10" height="6"><path d="M0 0h10L5 6z" fill="#000"/></svg></div>
<div class="t" style="left:1000px;width:101px;text-align:right;top:290px;font-size:11px;transform:scaleX(.966);transform-origin:100% 0">Kiểu giáp cận</div>
<div class="a" style="left:1107px;top:287px;width:192px;height:17px;background:#f0f0f0;border-top:1px solid #fff;border-left:1px solid #fff;border-right:1px solid #a0a0a0;border-bottom:1px solid #a0a0a0;box-shadow:1px 1px 0 #696969"><div class="t" style="left:8px;top:2px;font-size:11px;color:#000;font-weight:400;transform:scaleX(.966);transform-origin:0 0">Số hiệu thửa</div><svg class="a" style="left:174px;top:4px" width="10" height="6"><path d="M0 0h10L5 6z" fill="#000"/></svg></div>
<div class="t" style="left:1000px;width:101px;text-align:right;top:309px;font-size:11px;transform:scaleX(.966);transform-origin:100% 0">Diện tích sd</div>
<div class="a" style="left:1107px;top:306px;width:192px;height:17px;background:#f0f0f0;border-top:1px solid #fff;border-left:1px solid #fff;border-right:1px solid #a0a0a0;border-bottom:1px solid #a0a0a0;box-shadow:1px 1px 0 #696969"><div class="t" style="left:8px;top:2px;font-size:11px;color:#000;font-weight:400;transform:scaleX(.966);transform-origin:0 0">Diện tích bản đồ</div><svg class="a" style="left:174px;top:4px" width="10" height="6"><path d="M0 0h10L5 6z" fill="#000"/></svg></div>
<div class="a" style="left:1036px;top:330px;width:12px;height:12px;background:#fff;border-top:1px solid #a0a0a0;border-left:1px solid #a0a0a0;border-right:1px solid #fff;border-bottom:1px solid #fff;box-shadow:inset 1px 1px 0 #696969"></div>
<div class="t" style="left:1055px;top:332px;font-size:11px;color:#000;font-weight:400;transform:scaleX(.966);transform-origin:0 0">Vẽ chiều dài cạnh</div>
<div class="a" style="left:1180px;top:330px;width:12px;height:12px;background:#fff;border-top:1px solid #a0a0a0;border-left:1px solid #a0a0a0;border-right:1px solid #fff;border-bottom:1px solid #fff;box-shadow:inset 1px 1px 0 #696969"><svg class="a" style="left:2px;top:2px" width="8" height="8"><path d="M0.5 3.5l2.5 2.5 4.5-5" fill="none" stroke="#000" stroke-width="1.6"/></svg></div>
<div class="t" style="left:1199px;top:332px;font-size:11px;color:#000;font-weight:400;transform:scaleX(.966);transform-origin:0 0">Hiện nhãn thửa</div>
<div class="a" style="left:1036px;top:348px;width:12px;height:12px;background:#fff;border-top:1px solid #a0a0a0;border-left:1px solid #a0a0a0;border-right:1px solid #fff;border-bottom:1px solid #fff;box-shadow:inset 1px 1px 0 #696969"><svg class="a" style="left:2px;top:2px" width="8" height="8"><path d="M0.5 3.5l2.5 2.5 4.5-5" fill="none" stroke="#000" stroke-width="1.6"/></svg></div>
<div class="t" style="left:1055px;top:350px;font-size:11px;color:#000;font-weight:400;transform:scaleX(.966);transform-origin:0 0">Mốc đỉnh thửa</div>
<div class="a" style="left:1180px;top:348px;width:12px;height:12px;background:#fff;border-top:1px solid #a0a0a0;border-left:1px solid #a0a0a0;border-right:1px solid #fff;border-bottom:1px solid #fff;box-shadow:inset 1px 1px 0 #696969"></div>
<div class="t" style="left:1199px;top:350px;font-size:11px;color:#000;font-weight:400;transform:scaleX(.966);transform-origin:0 0">Hiện tên chủ</div>
<div class="t" style="left:1035px;top:369px;font-size:11px;color:#000;font-weight:400;transform:scaleX(.966);transform-origin:0 0">Lớp giải tỏa</div>
<div class="a" style="left:1097px;top:366px;width:30px;height:17px;background:#fff;border-top:2px solid #8c8c8c;border-left:2px solid #8c8c8c;border-right:1px solid #e3e3e3;border-bottom:1px solid #e3e3e3"><div class="t" style="left:3px;top:1px;font-size:11px;color:#000;font-weight:400;">5</div></div>
<div class="t" style="left:1132px;top:369px;font-size:11px;color:#000;font-weight:400;transform:scaleX(.966);transform-origin:0 0">(kiểu shape hoặc complex shape)</div>
<div class="t" style="left:1000px;width:218px;text-align:right;top:388px;font-size:11px;transform:scaleX(.966);transform-origin:100% 0">Tạo điểm cắt ranh thửa với lớp lộ giới</div>
<div class="a" style="left:1224px;top:386px;width:71px;height:16px;background:#fff;border-top:2px solid #8c8c8c;border-left:2px solid #8c8c8c;border-right:1px solid #e3e3e3;border-bottom:1px solid #e3e3e3"><div class="t" style="left:3px;top:1px;font-size:11px;color:#000;font-weight:400;">5</div></div>
<div class="t" style="left:1000px;width:218px;text-align:right;top:409px;font-size:11px;transform:scaleX(.966);transform-origin:100% 0">Các lớp bổ sung thông tin vào trích lục</div>
<div class="a" style="left:1224px;top:407px;width:71px;height:16px;background:#fff;border-top:2px solid #8c8c8c;border-left:2px solid #8c8c8c;border-right:1px solid #e3e3e3;border-bottom:1px solid #e3e3e3"><div class="t" style="left:3px;top:1px;font-size:11px;color:#000;font-weight:400;">14,15,16</div></div>
<div class="t" style="left:1000px;width:218px;text-align:right;top:431px;font-size:11px;transform:scaleX(.966);transform-origin:100% 0">Các lớp bổ sung thông tin vào họa đồ</div>
<div class="a" style="left:1224px;top:429px;width:71px;height:16px;background:#fff;border-top:2px solid #8c8c8c;border-left:2px solid #8c8c8c;border-right:1px solid #e3e3e3;border-bottom:1px solid #e3e3e3"><div class="t" style="left:3px;top:1px;font-size:11px;color:#000;font-weight:400;">10,61</div></div>
<div class="t" style="left:1000px;width:218px;text-align:right;top:452px;font-size:11px;transform:scaleX(.966);transform-origin:100% 0">Các lớp giao thông, thủy hệ, hình tuyến</div>
<div class="a" style="left:1224px;top:450px;width:71px;height:16px;background:#fff;border-top:2px solid #8c8c8c;border-left:2px solid #8c8c8c;border-right:1px solid #e3e3e3;border-bottom:1px solid #e3e3e3"><div class="t" style="left:3px;top:1px;font-size:11px;color:#000;font-weight:400;">23,32</div></div>
<div class="t" style="left:1037px;top:472px;font-size:11px;color:#000;font-weight:400;transform:scaleX(.966);transform-origin:0 0">Trích lục từ thửa</div>
<div class="a" style="left:1122px;top:470px;width:58px;height:16px;background:#fff;border-top:2px solid #8c8c8c;border-left:2px solid #8c8c8c;border-right:1px solid #e3e3e3;border-bottom:1px solid #e3e3e3"><div class="t" style="left:3px;top:1px;font-size:11px;color:#000;font-weight:400;">1</div></div>
<div class="t" style="left:1187px;top:472px;font-size:11px;color:#000;font-weight:400;transform:scaleX(.966);transform-origin:0 0">đến thửa</div>
<div class="a" style="left:1236px;top:470px;width:58px;height:16px;background:#fff;border-top:2px solid #8c8c8c;border-left:2px solid #8c8c8c;border-right:1px solid #e3e3e3;border-bottom:1px solid #e3e3e3"><div class="t" style="left:3px;top:1px;font-size:11px;color:#000;font-weight:400;">10000</div></div>
<div class="a" style="left:1036px;top:491px;width:12px;height:12px;background:#fff;border-top:1px solid #a0a0a0;border-left:1px solid #a0a0a0;border-right:1px solid #fff;border-bottom:1px solid #fff;box-shadow:inset 1px 1px 0 #696969"></div>
<div class="t" style="left:1055px;top:491px;font-size:11px;color:#000;font-weight:400;transform:scaleX(.966);transform-origin:0 0">Chỉ xử lý những thửa có giải toả</div>
<div class="a" style="left:1036px;top:514px;width:12px;height:12px;background:#fff;border-top:1px solid #a0a0a0;border-left:1px solid #a0a0a0;border-right:1px solid #fff;border-bottom:1px solid #fff;box-shadow:inset 1px 1px 0 #696969"></div>
<div class="t" style="left:1055px;top:514px;font-size:11px;color:#000;font-weight:400;transform:scaleX(.966);transform-origin:0 0">Lọc những thửa có loại đất trong file locloaidat.ini</div>
<div class="t" style="left:1034px;top:537px;font-size:11px;color:#000;font-weight:400;transform:scaleX(.966);transform-origin:0 0">Thư mục trích lục</div>
<div class="a" style="left:1123px;top:534px;width:147px;height:17px;background:#fff;border-top:2px solid #8c8c8c;border-left:2px solid #8c8c8c;border-right:1px solid #e3e3e3;border-bottom:1px solid #e3e3e3"><div class="t" style="left:3px;top:1px;font-size:11px;color:#000;font-weight:400;">c:\hsktgcn\Buoc1\</div></div>
<div class="a" style="left:1276px;top:534px;width:19px;height:17px;background:#f0f0f0;border-top:1px solid #fff;border-left:1px solid #fff;border-right:1px solid #a0a0a0;border-bottom:1px solid #a0a0a0;box-shadow:1px 1px 0 #696969"><div class="t" style="left:0;width:17px;text-align:center;top:2px;font-size:11px">...</div></div>
<div class="a" style="left:670px;top:150px;width:240px;height:391px;background:#f0f0f0;border:1px solid #6d6d6d;box-shadow:1px 1px 0 #a0a0a0"></div>
<div class="a" style="left:672px;top:152px;width:236px;height:14px;background:#0078d7;"></div>
<div class="t" style="left:678px;top:154px;font-size:11px;color:#fff;font-weight:400;">Hồ sơ kỹ thuật thửa đất</div>
<div class="t" style="left:678px;top:169px;font-size:11px;color:#000;font-weight:400;">Hồ sơ giải toả đền bù</div>
<div class="t" style="left:678px;top:184px;font-size:11px;color:#000;font-weight:400;">Biên bản hiện trạng sử dụng</div>
<div class="t" style="left:678px;top:199px;font-size:11px;color:#000;font-weight:400;">Hồ sơ tổ chức theo Chỉ thị 31</div>
<div class="t" style="left:678px;top:214px;font-size:11px;color:#000;font-weight:400;">Bản mô tả ranh mốc giới thửa đất</div>
<div class="t" style="left:678px;top:229px;font-size:11px;color:#000;font-weight:400;">Biên bản thẩm tra nguồn gốc</div>
<div class="t" style="left:678px;top:244px;font-size:11px;color:#000;font-weight:400;">Trích lục bản đồ địa chính có tọa độ</div>
<div class="t" style="left:678px;top:259px;font-size:11px;color:#000;font-weight:400;">Hồ sơ kỹ thuật thửa đất VLAP</div>
<div class="t" style="left:678px;top:274px;font-size:11px;color:#000;font-weight:400;">Trích lục thửa đất</div>
<div class="t" style="left:678px;top:296px;font-size:11px;color:#000;font-weight:400;">Bản mô tả ranh mốc giới thửa đất (TT21)</div>
<div class="t" style="left:678px;top:311px;font-size:11px;color:#000;font-weight:400;">Kết quả đo đạc địa chính thửa đất (TT21)</div>
<div class="t" style="left:678px;top:326px;font-size:11px;color:#000;font-weight:400;">Trích lục bản đồ địa chính (TT21)</div>
<div class="t" style="left:678px;top:348px;font-size:11px;color:#000;font-weight:400;">Bản mô tả ranh mốc giới thửa đất (TT25)</div>
<div class="t" style="left:678px;top:363px;font-size:11px;color:#000;font-weight:400;">Xác nhận kết quả đo đạc hiện trạng (TT25)</div>
<div class="t" style="left:678px;top:378px;font-size:11px;color:#000;font-weight:400;">Trích lục bản đồ địa chính (TT25)</div>
<div class="t" style="left:678px;top:400px;font-size:11px;color:#000;font-weight:400;">Trích lục, trích đo địa chính Bình Định</div>
<div class="t" style="left:678px;top:415px;font-size:11px;color:#000;font-weight:400;">Trích lục, trích đo địa chính Phú Yên</div>
<div class="t" style="left:678px;top:430px;font-size:11px;color:#000;font-weight:400;">Trích lục, trích đo địa chính Long An</div>
<div class="t" style="left:678px;top:445px;font-size:11px;color:#000;font-weight:400;">Trích lục, trích đo địa chính Quảng Nam</div>
<div class="t" style="left:678px;top:460px;font-size:11px;color:#000;font-weight:400;">Trích lục, trích đo địa chính Bình Thuận</div>
<div class="t" style="left:678px;top:475px;font-size:11px;color:#000;font-weight:400;">Trích lục, trích đo địa chính Bến Tre</div>
<div class="t" style="left:678px;top:490px;font-size:11px;color:#000;font-weight:400;">Trích lục, trích đo địa chính Bình Phước</div>
<div class="t" style="left:678px;top:505px;font-size:11px;color:#000;font-weight:400;">Trích lục, trích đo địa chính Hậu Giang</div>
<div class="t" style="left:678px;top:527px;font-size:11px;color:#000;font-weight:400;">Tính diện tích giải toả đền bù</div>
<div class="a" style="left:672px;top:289px;width:236px;height:1px;background:#a0a0a0;"></div>
<div class="a" style="left:672px;top:290px;width:236px;height:1px;background:#fff;"></div>
<div class="a" style="left:672px;top:341px;width:236px;height:1px;background:#a0a0a0;"></div>
<div class="a" style="left:672px;top:342px;width:236px;height:1px;background:#fff;"></div>
<div class="a" style="left:672px;top:393px;width:236px;height:1px;background:#a0a0a0;"></div>
<div class="a" style="left:672px;top:394px;width:236px;height:1px;background:#fff;"></div>
<div class="a" style="left:672px;top:520px;width:236px;height:1px;background:#a0a0a0;"></div>
<div class="a" style="left:672px;top:521px;width:236px;height:1px;background:#fff;"></div>
<svg class="a" style="left:898px;top:400px" width="5" height="8"><path d="M0 0v8l4-4z" fill="#000"/></svg>
<svg class="a" style="left:898px;top:415px" width="5" height="8"><path d="M0 0v8l4-4z" fill="#000"/></svg>
<svg class="a" style="left:898px;top:430px" width="5" height="8"><path d="M0 0v8l4-4z" fill="#000"/></svg>
<svg class="a" style="left:898px;top:445px" width="5" height="8"><path d="M0 0v8l4-4z" fill="#000"/></svg>
<svg class="a" style="left:898px;top:460px" width="5" height="8"><path d="M0 0v8l4-4z" fill="#000"/></svg>
<svg class="a" style="left:898px;top:475px" width="5" height="8"><path d="M0 0v8l4-4z" fill="#000"/></svg>
<svg class="a" style="left:898px;top:490px" width="5" height="8"><path d="M0 0v8l4-4z" fill="#000"/></svg>
<svg class="a" style="left:898px;top:505px" width="5" height="8"><path d="M0 0v8l4-4z" fill="#000"/></svg>
</body></html>
